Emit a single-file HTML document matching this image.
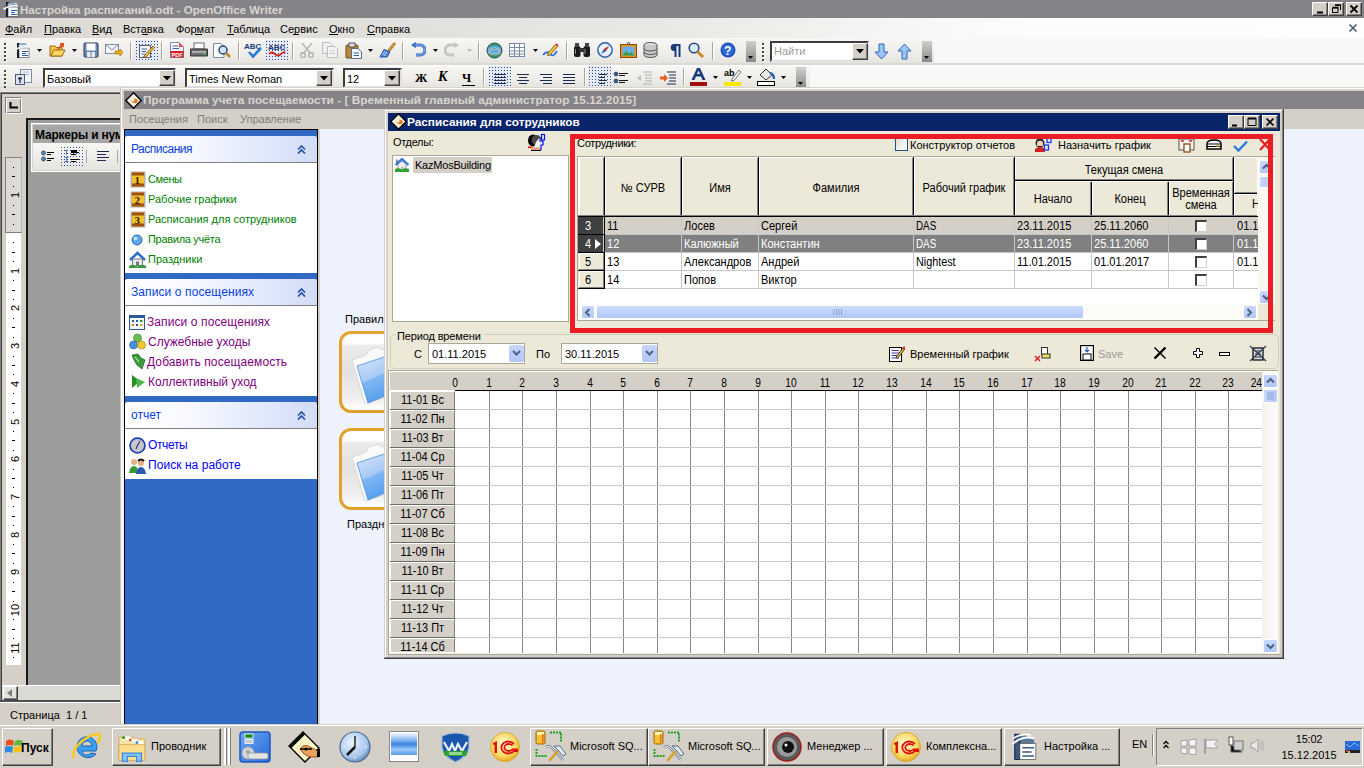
<!DOCTYPE html><html><head><meta charset="utf-8"><style>
html,body{margin:0;padding:0;width:1364px;height:768px;overflow:hidden;background:#d4d0c8}
body{position:relative;font-family:"Liberation Sans",sans-serif}
div,span,svg{position:absolute;box-sizing:border-box}
.t{white-space:nowrap}
</style></head><body>
<div style="left:0px;top:0px;width:1364px;height:18px;background:#858388"></div>
<svg style="left:1px;top:1px" width="18" height="16" viewBox="0 0 18 16"><rect x="5" y="1" width="2.5" height="15" fill="#0a1830"/><path d="M7 6H17V15.5H7Z" fill="#fff" stroke="#3a3a3a" stroke-width="0.6"/><path d="M10 9.5H16M10 11.5H14M10 13.5H16" stroke="#2a5aa8" stroke-width="1.2"/><path d="M2.5 8.5Q9 3.5 17 5" fill="none" stroke="#f4f6fa" stroke-width="1.6"/><path d="M6.5 4Q11 1 16 3" fill="none" stroke="#dde6f2" stroke-width="1.4"/><path d="M8 2H14" stroke="#4a78b8" stroke-width="1"/></svg>
<span class="t" style="left:20px;top:4px;font-size:11.6px;line-height:11.6px;color:#d8d5ce;font-weight:bold;letter-spacing:0px">Настройка расписаний.odt - OpenOffice Writer</span>
<div style="left:1312px;top:2px;width:16px;height:14px;background:#d4d0c8;border-top:1px solid #fff;border-left:1px solid #fff;border-right:1px solid #404040;border-bottom:1px solid #404040;box-shadow:inset -1px -1px 0 #808080"></div>
<div style="left:1328px;top:2px;width:16px;height:14px;background:#d4d0c8;border-top:1px solid #fff;border-left:1px solid #fff;border-right:1px solid #404040;border-bottom:1px solid #404040;box-shadow:inset -1px -1px 0 #808080"></div>
<div style="left:1346px;top:2px;width:16px;height:14px;background:#d4d0c8;border-top:1px solid #fff;border-left:1px solid #fff;border-right:1px solid #404040;border-bottom:1px solid #404040;box-shadow:inset -1px -1px 0 #808080"></div>
<svg style="left:1316px;top:5px" width="9" height="9" viewBox="0 0 9 9"><path d="M1 7.5H7" stroke="#000" stroke-width="2"/></svg>
<svg style="left:1332px;top:4px" width="9" height="9" viewBox="0 0 9 9"><path d="M3 1.5H8.5V6M0.5 4H6V8.5H0.5Z" fill="none" stroke="#000" stroke-width="1"/><path d="M3 1H9M0.5 3.5H6.5" stroke="#000" stroke-width="1.5"/></svg>
<svg style="left:1349px;top:4px" width="10" height="10" viewBox="0 0 10 10"><path d="M1.5 1.5L8.5 8.5M8.5 1.5L1.5 8.5" stroke="#000" stroke-width="1.8"/></svg>
<div style="left:0px;top:18px;width:1364px;height:20px;background:linear-gradient(90deg,#dddad4 0%,#e2e0dc 30%,#ebe9e6 50%,#f6f5f3 65%,#fdfcfc 75%,#fefcfc 100%)"></div>
<span class="t" style="left:5px;top:24px;font-size:11px;line-height:11px;color:#000;font-weight:normal;">Файл</span>
<span class="t" style="left:44px;top:24px;font-size:11px;line-height:11px;color:#000;font-weight:normal;">Правка</span>
<span class="t" style="left:92px;top:24px;font-size:11px;line-height:11px;color:#000;font-weight:normal;">Вид</span>
<span class="t" style="left:123px;top:24px;font-size:11px;line-height:11px;color:#000;font-weight:normal;">Вставка</span>
<span class="t" style="left:176px;top:24px;font-size:11px;line-height:11px;color:#000;font-weight:normal;">Формат</span>
<span class="t" style="left:227px;top:24px;font-size:11px;line-height:11px;color:#000;font-weight:normal;">Таблица</span>
<span class="t" style="left:280px;top:24px;font-size:11px;line-height:11px;color:#000;font-weight:normal;">Сервис</span>
<span class="t" style="left:329px;top:24px;font-size:11px;line-height:11px;color:#000;font-weight:normal;">Окно</span>
<span class="t" style="left:367px;top:24px;font-size:11px;line-height:11px;color:#000;font-weight:normal;">Справка</span>
<div style="left:5px;top:34px;width:9px;height:1px;background:#000"></div>
<div style="left:44px;top:34px;width:8px;height:1px;background:#000"></div>
<div style="left:92px;top:34px;width:7px;height:1px;background:#000"></div>
<div style="left:142px;top:34px;width:6px;height:1px;background:#000"></div>
<div style="left:195px;top:34px;width:7px;height:1px;background:#000"></div>
<div style="left:227px;top:34px;width:7px;height:1px;background:#000"></div>
<div style="left:293px;top:34px;width:6px;height:1px;background:#000"></div>
<div style="left:329px;top:34px;width:9px;height:1px;background:#000"></div>
<div style="left:367px;top:34px;width:8px;height:1px;background:#000"></div>
<svg style="left:1348px;top:23px" width="10" height="10" viewBox="0 0 10 10"><path d="M1.5 1.5L8.5 8.5M8.5 1.5L1.5 8.5" stroke="#4a5a6a" stroke-width="1.6"/></svg>
<div style="left:0px;top:38px;width:1364px;height:25px;background:#faf8f7"></div>
<div style="left:0px;top:38px;width:934px;height:25px;background:linear-gradient(180deg,#f8f7f5 0%,#efedea 60%,#e6e4df 100%)"></div>
<div style="left:0px;top:63px;width:1364px;height:2px;background:#dcd9d4"></div>
<div style="left:0px;top:65px;width:1364px;height:1px;background:#fff"></div>
<div style="left:4px;top:43px;width:2px;height:2px;background:#444;box-shadow:1px 1px 0 #fff"></div>
<div style="left:4px;top:47px;width:2px;height:2px;background:#444;box-shadow:1px 1px 0 #fff"></div>
<div style="left:4px;top:51px;width:2px;height:2px;background:#444;box-shadow:1px 1px 0 #fff"></div>
<div style="left:4px;top:55px;width:2px;height:2px;background:#444;box-shadow:1px 1px 0 #fff"></div>
<div style="left:4px;top:59px;width:2px;height:2px;background:#444;box-shadow:1px 1px 0 #fff"></div>
<svg style="left:12px;top:42px" width="18" height="16" viewBox="0 0 18 16"><rect x="5" y="1" width="2.5" height="15" fill="#0a1830"/><path d="M7 6H17V15.5H7Z" fill="#fff" stroke="#3a3a3a" stroke-width="0.6"/><path d="M10 9.5H16M10 11.5H14M10 13.5H16" stroke="#2a5aa8" stroke-width="1.2"/><path d="M2.5 8.5Q9 3.5 17 5" fill="none" stroke="#f4f6fa" stroke-width="1.6"/><path d="M6.5 4Q11 1 16 3" fill="none" stroke="#dde6f2" stroke-width="1.4"/><path d="M8 2H14" stroke="#4a78b8" stroke-width="1"/></svg>
<svg style="left:37px;top:49px" width="5" height="3" viewBox="0 0 5 3"><path d="M0 0H5L2.5 3Z" fill="#000"/></svg>
<svg style="left:49px;top:42px" width="17" height="16" viewBox="0 0 17 16"><path d="M1 4H6L7.5 5.5H13V14H1Z" fill="#f4c64a" stroke="#9a6a10"/><path d="M2 14L4.5 8H16L13 14Z" fill="#fbd765" stroke="#9a6a10"/><path d="M9 7L14 2M11 2H14V5" stroke="#e2541a" stroke-width="2" fill="none"/></svg>
<svg style="left:72px;top:49px" width="5" height="3" viewBox="0 0 5 3"><path d="M0 0H5L2.5 3Z" fill="#000"/></svg>
<svg style="left:83px;top:42px" width="16" height="16" viewBox="0 0 16 16"><rect x="1" y="1" width="14" height="14" rx="1" fill="#6a88b0" stroke="#2a3a58"/><rect x="3.5" y="1.5" width="9" height="7" fill="#fff"/><rect x="4" y="10" width="8" height="5" fill="#e8ecf2"/><path d="M8 10V15" stroke="#6a88b0"/></svg>
<svg style="left:105px;top:44px" width="18" height="13" viewBox="0 0 18 13"><rect x="0.5" y="0.5" width="13" height="9" fill="#f4f6fa" stroke="#7c8aa0"/><path d="M0.5 0.5L7 6L13.5 0.5" fill="none" stroke="#7c8aa0"/><path d="M10 7H15V5L18 8.5L15 12V10H10Z" fill="#f0b020" stroke="#b07000" stroke-width="0.7"/></svg>
<div style="left:130px;top:42px;width:1px;height:18px;background:#a7a6a3;border-right:1px solid #fff;width:2px"></div>
<div style="left:135px;top:40px;width:23px;height:22px;background-image:radial-gradient(#1f4fa8 0.8px,transparent 1px);background-size:3px 3px;background-color:#e8eaf0"></div>
<svg style="left:138px;top:43px" width="17" height="16" viewBox="0 0 17 16"><rect x="1.5" y="2.5" width="11" height="12" fill="#f4f6fa" stroke="#50607a"/><path d="M3.5 6H9M3.5 8.5H8M3.5 11H7" stroke="#3a6ab0"/><path d="M6 13L15 3L16.5 4.5L8 14L5.5 14.5Z" fill="#f6c838" stroke="#704010" stroke-width="0.8"/></svg>
<div style="left:161px;top:42px;width:1px;height:18px;background:#a7a6a3;border-right:1px solid #fff;width:2px"></div>
<svg style="left:170px;top:42px" width="14" height="16" viewBox="0 0 14 16"><path d="M0.5 0.5H9L13.5 5V15.5H0.5Z" fill="#f8f8fa" stroke="#7a8aa8"/><path d="M2.5 4H8M2.5 6.5H9" stroke="#3a6ab0"/><rect x="0.5" y="9" width="13" height="6.5" fill="#d42020"/><text x="1.5" y="14.5" font-size="5.5" font-weight="bold" fill="#fff" font-family="Liberation Sans">PDF</text><path d="M9 0.5V5H13.5" fill="#e44" /></svg>
<svg style="left:190px;top:42px" width="18" height="16" viewBox="0 0 18 16"><rect x="4" y="1" width="10" height="6" fill="#fff" stroke="#666"/><path d="M0.5 7H17.5V14H0.5Z" fill="#6c6c70" stroke="#333"/><rect x="2" y="9" width="14" height="2" fill="#aaa"/><rect x="13" y="11.5" width="2" height="1.5" fill="#3c3"/></svg>
<svg style="left:213px;top:42px" width="18" height="17" viewBox="0 0 18 17"><path d="M0.5 1.5H8L11 4.5V15.5H0.5Z" fill="#fafbfc" stroke="#7a8aa8"/><circle cx="10" cy="8" r="4" fill="#cfe4f8" stroke="#2a4a78" stroke-width="1.5"/><path d="M13 11L17 15" stroke="#c08020" stroke-width="2.5"/></svg>
<div style="left:238px;top:42px;width:1px;height:18px;background:#a7a6a3;border-right:1px solid #fff;width:2px"></div>
<svg style="left:244px;top:41px" width="19" height="18" viewBox="0 0 19 18"><text x="0" y="8" font-size="8" font-weight="bold" fill="#1a3a78" font-family="Liberation Sans">ABC</text><path d="M5 11L9 15.5L17 7" fill="none" stroke="#2a78d8" stroke-width="2.6"/></svg>
<div style="left:265px;top:40px;width:23px;height:22px;background-image:radial-gradient(#1f4fa8 0.8px,transparent 1px);background-size:3px 3px;background-color:#e8eaf0"></div>
<svg style="left:267px;top:41px" width="19" height="18" viewBox="0 0 19 18"><text x="1" y="9" font-size="8" font-weight="bold" fill="#1a3a78" font-family="Liberation Sans">ABC</text><path d="M2 13Q5 10 8 13T14 13T18 12" fill="none" stroke="#d42020" stroke-width="1.8"/></svg>
<div style="left:292px;top:42px;width:1px;height:18px;background:#a7a6a3;border-right:1px solid #fff;width:2px"></div>
<svg style="left:299px;top:42px" width="17" height="16" viewBox="0 0 17 16"><path d="M3 1L12 12M13 1L4 12" stroke="#b8b8b8" stroke-width="1.6"/><circle cx="4" cy="13" r="2.4" fill="none" stroke="#b0b0b0" stroke-width="1.4"/><circle cx="12" cy="13" r="2.4" fill="none" stroke="#b0b0b0" stroke-width="1.4"/></svg>
<svg style="left:322px;top:42px" width="16" height="16" viewBox="0 0 16 16"><path d="M0.5 0.5H8L10.5 3V11.5H0.5Z" fill="#f0f0f0" stroke="#bdbdbd"/><path d="M5.5 4.5H13L15.5 7V15.5H5.5Z" fill="#f4f4f4" stroke="#bdbdbd"/><path d="M7.5 9H13M7.5 11.5H13" stroke="#c8c8c8"/></svg>
<svg style="left:345px;top:42px" width="17" height="17" viewBox="0 0 17 17"><rect x="1" y="3" width="12" height="13" rx="1" fill="#b88a40" stroke="#6a4a10"/><rect x="4" y="1" width="6" height="4" fill="#e0e0e0" stroke="#555"/><path d="M6.5 6.5H13L16.5 10V16.5H6.5Z" fill="#f4f8fc" stroke="#5a6a88"/><path d="M8.5 11H14M8.5 13.5H14" stroke="#3a6ab0"/></svg>
<svg style="left:368px;top:49px" width="5" height="3" viewBox="0 0 5 3"><path d="M0 0H5L2.5 3Z" fill="#000"/></svg>
<svg style="left:379px;top:41px" width="17" height="18" viewBox="0 0 17 18"><path d="M9 9L15 1.5L16.5 3L11 10Z" fill="#e0a030" stroke="#805010" stroke-width="0.7"/><path d="M1 16L5 8.5L11 11L8 16Z" fill="#5a8ad8" stroke="#1a4a98"/><path d="M3 14L6 10M5 15L8 11" stroke="#bcd4f8"/></svg>
<div style="left:402px;top:42px;width:1px;height:18px;background:#a7a6a3;border-right:1px solid #fff;width:2px"></div>
<svg style="left:410px;top:42px" width="16" height="16" viewBox="0 0 16 16"><path d="M5 3H10A5 5 0 0 1 10 13H6" fill="none" stroke="#2a64c0" stroke-width="3"/><path d="M1 3L6 0V6Z" fill="#2a64c0"/><path d="M5 3H10A5 5 0 0 1 10 13H6" fill="none" stroke="#9cc0f0" stroke-width="1"/></svg>
<svg style="left:433px;top:49px" width="5" height="3" viewBox="0 0 5 3"><path d="M0 0H5L2.5 3Z" fill="#000"/></svg>
<svg style="left:444px;top:42px" width="16" height="16" viewBox="0 0 16 16"><path d="M11 3H6A5 5 0 0 0 6 13H10" fill="none" stroke="#c4c4c4" stroke-width="3"/><path d="M15 3L10 0V6Z" fill="#c4c4c4"/></svg>
<svg style="left:467px;top:49px" width="5" height="3" viewBox="0 0 5 3"><path d="M0 0H5L2.5 3Z" fill="#bbb"/></svg>
<div style="left:478px;top:42px;width:1px;height:18px;background:#a7a6a3;border-right:1px solid #fff;width:2px"></div>
<svg style="left:486px;top:42px" width="17" height="17" viewBox="0 0 17 17"><circle cx="8.5" cy="8.5" r="7.5" fill="#3a9a6a" stroke="#2a4a6a"/><path d="M2 6Q8 2 15 6V11Q8 15 2 11Z" fill="#5ab0e8"/><ellipse cx="8.5" cy="9.5" rx="5" ry="3" fill="none" stroke="#fff" stroke-width="1.6"/><ellipse cx="8.5" cy="9.5" rx="5" ry="3" fill="none" stroke="#333" stroke-width="0.6"/></svg>
<svg style="left:509px;top:42px" width="17" height="16" viewBox="0 0 17 16"><rect x="0.5" y="1.5" width="15" height="13" fill="#fff" stroke="#7a8aa8"/><path d="M0.5 5.5H15.5M0.5 9H15.5M0.5 12H15.5M5.5 1.5V14.5M10.5 1.5V14.5" stroke="#7a8aa8"/></svg>
<svg style="left:533px;top:49px" width="5" height="3" viewBox="0 0 5 3"><path d="M0 0H5L2.5 3Z" fill="#000"/></svg>
<svg style="left:542px;top:42px" width="17" height="16" viewBox="0 0 17 16"><path d="M1 13Q5 8 8 12T15 9" fill="none" stroke="#2a78d8" stroke-width="1.8"/><path d="M6 11L14 2L16 4L8 13L5.5 13.5Z" fill="#f6c838" stroke="#704010" stroke-width="0.8"/><path d="M14 2L16 4" stroke="#e04040" stroke-width="2"/></svg>
<div style="left:566px;top:42px;width:1px;height:18px;background:#a7a6a3;border-right:1px solid #fff;width:2px"></div>
<svg style="left:573px;top:42px" width="18" height="16" viewBox="0 0 18 16"><rect x="1" y="4" width="6.5" height="11" rx="2" fill="#1a1a1a"/><rect x="10.5" y="4" width="6.5" height="11" rx="2" fill="#1a1a1a"/><rect x="6" y="6" width="6" height="4" fill="#333"/><rect x="2" y="1" width="4" height="4" fill="#444"/><rect x="12" y="1" width="4" height="4" fill="#444"/><path d="M2.5 7V12M12 7V12" stroke="#888"/></svg>
<svg style="left:597px;top:42px" width="16" height="16" viewBox="0 0 16 16"><circle cx="8" cy="8" r="7.2" fill="#e8f0fa" stroke="#2a5aa8" stroke-width="1.4"/><path d="M4 12L7 7L12 4L9 9Z" fill="#2a5aa8"/><path d="M12 4L9 9L7 7Z" fill="#e03030"/></svg>
<svg style="left:620px;top:42px" width="17" height="16" viewBox="0 0 17 16"><rect x="0.5" y="2.5" width="16" height="13" fill="#e89020" stroke="#8a4a00"/><rect x="2.5" y="4.5" width="12" height="9" fill="#6ab0e8"/><path d="M2.5 13.5L6 9L9 12L11 10L14.5 13.5Z" fill="#3a9a3a"/><path d="M7 2L8.5 0L10 2" stroke="#555" fill="none"/></svg>
<svg style="left:643px;top:42px" width="15" height="16" viewBox="0 0 15 16"><ellipse cx="7.5" cy="3" rx="6.5" ry="2.5" fill="#e0e0e0" stroke="#555"/><path d="M1 3V13A6.5 2.5 0 0 0 14 13V3" fill="#c8c8c8" stroke="#555"/><path d="M1 6.5A6.5 2.5 0 0 0 14 6.5M1 10A6.5 2.5 0 0 0 14 10" fill="none" stroke="#555"/></svg>
<svg style="left:668px;top:43px" width="13" height="14" viewBox="0 0 13 14"><path d="M6 1H12.5V14H10.5V3H8.5V14H6.5V8A3.5 3.5 0 0 1 6 1Z" fill="#1a3a78"/></svg>
<svg style="left:688px;top:42px" width="16" height="16" viewBox="0 0 16 16"><circle cx="6" cy="6" r="4.8" fill="#d8ecfa" stroke="#2a4a78" stroke-width="1.6"/><path d="M9.5 9.5L15 15" stroke="#d08a20" stroke-width="3"/></svg>
<div style="left:712px;top:42px;width:1px;height:18px;background:#a7a6a3;border-right:1px solid #fff;width:2px"></div>
<svg style="left:720px;top:42px" width="16" height="16" viewBox="0 0 16 16"><circle cx="8" cy="8" r="7.5" fill="#1a4ab0"/><circle cx="8" cy="8" r="6.3" fill="#2a6ad8"/><text x="4" y="13" font-size="12" font-weight="bold" fill="#fff" font-family="Liberation Sans">?</text></svg>
<div style="left:746px;top:41px;width:10px;height:21px;background:linear-gradient(180deg,#d0d0d0,#8a8a8a)"></div>
<svg style="left:748px;top:56px" width="5" height="3" viewBox="0 0 5 3"><path d="M0 0H5L2.5 3Z" fill="#000"/></svg>
<div style="left:762px;top:43px;width:2px;height:2px;background:#444;box-shadow:1px 1px 0 #fff"></div>
<div style="left:762px;top:47px;width:2px;height:2px;background:#444;box-shadow:1px 1px 0 #fff"></div>
<div style="left:762px;top:51px;width:2px;height:2px;background:#444;box-shadow:1px 1px 0 #fff"></div>
<div style="left:762px;top:55px;width:2px;height:2px;background:#444;box-shadow:1px 1px 0 #fff"></div>
<div style="left:762px;top:59px;width:2px;height:2px;background:#444;box-shadow:1px 1px 0 #fff"></div>
<div style="left:770px;top:41px;width:99px;height:21px;background:#fff;border:2px solid #3c3c3c;border-right-color:#e0e0e0;border-bottom-color:#e0e0e0"></div>
<span class="t" style="left:774px;top:46px;font-size:11px;line-height:11px;color:#a0a0a0;font-weight:normal;">Найти</span>
<div style="left:852px;top:43px;width:16px;height:17px;background:#d4d0c8;border-top:1px solid #fff;border-left:1px solid #fff;border-right:1px solid #404040;border-bottom:1px solid #404040;box-shadow:inset -1px -1px 0 #808080"></div>
<svg style="left:856px;top:49px" width="8" height="5" viewBox="0 0 8 5"><path d="M0 0H8L4 4.5Z" fill="#000"/></svg>
<svg style="left:874px;top:43px" width="15" height="17" viewBox="0 0 15 17"><path d="M5 1H10V9H14L7.5 16L1 9H5Z" fill="#9cc4f4" stroke="#2a64c0"/></svg>
<svg style="left:897px;top:43px" width="15" height="17" viewBox="0 0 15 17"><path d="M5 16H10V8H14L7.5 1L1 8H5Z" fill="#9cc4f4" stroke="#2a64c0"/></svg>
<div style="left:922px;top:41px;width:10px;height:21px;background:linear-gradient(180deg,#d0d0d0,#8a8a8a)"></div>
<svg style="left:924px;top:56px" width="5" height="3" viewBox="0 0 5 3"><path d="M0 0H5L2.5 3Z" fill="#000"/></svg>
<div style="left:0px;top:66px;width:1364px;height:21px;background:#faf8f7"></div>
<div style="left:0px;top:66px;width:810px;height:21px;background:linear-gradient(180deg,#f8f7f5 0%,#efedea 60%,#e6e4df 100%)"></div>
<div style="left:0px;top:87px;width:1364px;height:1px;background:#dcd8d4"></div>
<div style="left:4px;top:70px;width:2px;height:2px;background:#444;box-shadow:1px 1px 0 #fff"></div>
<div style="left:4px;top:74px;width:2px;height:2px;background:#444;box-shadow:1px 1px 0 #fff"></div>
<div style="left:4px;top:78px;width:2px;height:2px;background:#444;box-shadow:1px 1px 0 #fff"></div>
<div style="left:4px;top:82px;width:2px;height:2px;background:#444;box-shadow:1px 1px 0 #fff"></div>
<div style="left:4px;top:86px;width:2px;height:2px;background:#444;box-shadow:1px 1px 0 #fff"></div>
<svg style="left:15px;top:68px" width="17" height="18" viewBox="0 0 17 18"><rect x="5.5" y="1.5" width="11" height="13" fill="#f4f6fa" stroke="#7a8aa8"/><path d="M7.5 4H14M7.5 6.5H14" stroke="#a8b8d0"/><rect x="0.5" y="6.5" width="9" height="10" fill="#dde4ee" stroke="#4a5a78"/><path d="M5 9V15M3 10.5H7" stroke="#1a2a48" stroke-width="1.3"/></svg>
<div style="left:43px;top:68px;width:133px;height:20px;background:#fff;border:2px solid #3c3c3c;border-right-color:#e0e0e0;border-bottom-color:#e0e0e0"></div>
<span class="t" style="left:47px;top:74px;font-size:11px;line-height:11px;color:#000;font-weight:normal;">Базовый</span>
<div style="left:159px;top:70px;width:16px;height:16px;background:#d4d0c8;border-top:1px solid #fff;border-left:1px solid #fff;border-right:1px solid #404040;border-bottom:1px solid #404040;box-shadow:inset -1px -1px 0 #808080"></div>
<svg style="left:163px;top:76px" width="8" height="5" viewBox="0 0 8 5"><path d="M0 0H8L4 4.5Z" fill="#000"/></svg>
<div style="left:185px;top:68px;width:149px;height:20px;background:#fff;border:2px solid #3c3c3c;border-right-color:#e0e0e0;border-bottom-color:#e0e0e0"></div>
<span class="t" style="left:189px;top:74px;font-size:11px;line-height:11px;color:#000;font-weight:normal;">Times New Roman</span>
<div style="left:316px;top:70px;width:16px;height:16px;background:#d4d0c8;border-top:1px solid #fff;border-left:1px solid #fff;border-right:1px solid #404040;border-bottom:1px solid #404040;box-shadow:inset -1px -1px 0 #808080"></div>
<svg style="left:320px;top:76px" width="8" height="5" viewBox="0 0 8 5"><path d="M0 0H8L4 4.5Z" fill="#000"/></svg>
<div style="left:343px;top:68px;width:59px;height:20px;background:#fff;border:2px solid #3c3c3c;border-right-color:#e0e0e0;border-bottom-color:#e0e0e0"></div>
<span class="t" style="left:347px;top:74px;font-size:11px;line-height:11px;color:#000;font-weight:normal;">12</span>
<div style="left:384px;top:70px;width:16px;height:16px;background:#d4d0c8;border-top:1px solid #fff;border-left:1px solid #fff;border-right:1px solid #404040;border-bottom:1px solid #404040;box-shadow:inset -1px -1px 0 #808080"></div>
<svg style="left:388px;top:76px" width="8" height="5" viewBox="0 0 8 5"><path d="M0 0H8L4 4.5Z" fill="#000"/></svg>
<span class="t" style="left:415px;top:72px;font-size:12.5px;line-height:12.5px;color:#000;font-weight:bold;font-family:Liberation Serif">Ж</span>
<span class="t" style="left:438px;top:70px;font-size:14px;line-height:14px;color:#000;font-weight:bold;font-style:italic;font-family:Liberation Serif">К</span>
<span class="t" style="left:462px;top:72px;font-size:12.5px;line-height:12.5px;color:#000;font-weight:bold;font-family:Liberation Serif">Ч</span>
<div style="left:462px;top:85px;width:13px;height:1px;background:#000"></div>
<div style="left:483px;top:68px;width:1px;height:18px;background:#a7a6a3;border-right:1px solid #fff;width:2px"></div>
<div style="left:488px;top:66px;width:23px;height:22px;background-image:radial-gradient(#1f4fa8 0.8px,transparent 1px);background-size:3px 3px;background-color:#e8eaf0"></div>
<svg style="left:492px;top:70px" width="16" height="16" viewBox="0 0 16 16"><path d="M2 4.5H14" stroke="#1a2a48" stroke-width="1"/><path d="M2 7.5H14" stroke="#1a2a48" stroke-width="1"/><path d="M2 10.5H14" stroke="#1a2a48" stroke-width="1"/><path d="M2 13.5H14" stroke="#1a2a48" stroke-width="1"/></svg>
<svg style="left:515px;top:70px" width="16" height="16" viewBox="0 0 16 16"><path d="M2 4.5H14" stroke="#1a2a48" stroke-width="1"/><path d="M4 7.5H12" stroke="#1a2a48" stroke-width="1"/><path d="M2 10.5H14" stroke="#1a2a48" stroke-width="1"/><path d="M4 13.5H12" stroke="#1a2a48" stroke-width="1"/></svg>
<svg style="left:538px;top:70px" width="16" height="16" viewBox="0 0 16 16"><path d="M2 4.5H14" stroke="#1a2a48" stroke-width="1"/><path d="M5 7.5H14" stroke="#1a2a48" stroke-width="1"/><path d="M2 10.5H14" stroke="#1a2a48" stroke-width="1"/><path d="M5 13.5H14" stroke="#1a2a48" stroke-width="1"/></svg>
<svg style="left:561px;top:70px" width="16" height="16" viewBox="0 0 16 16"><path d="M2 4.5H14" stroke="#1a2a48" stroke-width="1"/><path d="M2 7.5H14" stroke="#1a2a48" stroke-width="1"/><path d="M2 10.5H14" stroke="#1a2a48" stroke-width="1"/><path d="M2 13.5H14" stroke="#1a2a48" stroke-width="1"/></svg>
<div style="left:584px;top:68px;width:1px;height:18px;background:#a7a6a3;border-right:1px solid #fff;width:2px"></div>
<div style="left:588px;top:66px;width:23px;height:22px;background-image:radial-gradient(#1f4fa8 0.8px,transparent 1px);background-size:3px 3px;background-color:#e8eaf0"></div>
<svg style="left:592px;top:70px" width="16" height="16" viewBox="0 0 16 16"><path d="M7 4.5H15" stroke="#1a2a48" stroke-width="1"/><path d="M7 7.5H13" stroke="#1a2a48" stroke-width="1"/><path d="M7 10.5H15" stroke="#1a2a48" stroke-width="1"/><path d="M7 13.5H13" stroke="#1a2a48" stroke-width="1"/></svg>
<svg style="left:613px;top:70px" width="16" height="16" viewBox="0 0 16 16"><circle cx="3" cy="4" r="2" fill="#3a5a8a" stroke="#1a2a48" stroke-width="0.6"/><circle cx="3" cy="11" r="2" fill="#3a5a8a" stroke="#1a2a48" stroke-width="0.6"/><path d="M6 3.5H15M6 5.5H12M6 10.5H15M6 12.5H12" stroke="#111" stroke-width="1"/></svg>
<svg style="left:636px;top:70px" width="17" height="16" viewBox="0 0 17 16"><path d="M7 2H16M9 5H16M9 8H16M9 11H16M7 14H16" stroke="#b0b0b0" stroke-width="1.2"/><path d="M1 8L5 5V11Z" fill="#c0c0c0"/></svg>
<svg style="left:660px;top:70px" width="17" height="16" viewBox="0 0 17 16"><path d="M7 2H16M9 5H16M9 8H16M9 11H16M7 14H16" stroke="#1a2a48" stroke-width="1.2"/><path d="M0 6.5H4V4L8 8L4 12V9.5H0Z" fill="#e86020"/></svg>
<div style="left:683px;top:68px;width:1px;height:18px;background:#a7a6a3;border-right:1px solid #fff;width:2px"></div>
<svg style="left:690px;top:67px" width="17" height="20" viewBox="0 0 17 20"><path d="M1.5 13L7 1H10L15.5 13H12.5L11 9.5H6L4.5 13ZM7 7H10L8.5 3.5Z" fill="#1a3a78"/><rect x="0" y="15" width="17" height="4" fill="#a01010"/></svg>
<svg style="left:713px;top:76px" width="5" height="3" viewBox="0 0 5 3"><path d="M0 0H5L2.5 3Z" fill="#000"/></svg>
<svg style="left:724px;top:67px" width="18" height="20" viewBox="0 0 18 20"><text x="0" y="9" font-size="9" font-weight="bold" fill="#000" font-family="Liberation Sans">ab</text><path d="M8 12L15 3L17 5L10 13.5L7.5 14Z" fill="#f4f4f4" stroke="#555" stroke-width="0.8"/><rect x="0" y="15" width="17" height="4" fill="#f8e800"/></svg>
<svg style="left:747px;top:76px" width="5" height="3" viewBox="0 0 5 3"><path d="M0 0H5L2.5 3Z" fill="#000"/></svg>
<svg style="left:757px;top:67px" width="19" height="20" viewBox="0 0 19 20"><path d="M3 8L9 2L15 8L9 13Z" fill="#e8e8e8" stroke="#333"/><path d="M13 6Q17 7 17 12" stroke="#2a64c0" stroke-width="2.5" fill="none"/><rect x="0.5" y="14.5" width="17" height="4" fill="#fff" stroke="#000"/></svg>
<svg style="left:781px;top:76px" width="5" height="3" viewBox="0 0 5 3"><path d="M0 0H5L2.5 3Z" fill="#000"/></svg>
<div style="left:796px;top:67px;width:10px;height:21px;background:linear-gradient(180deg,#d0d0d0,#8a8a8a)"></div>
<svg style="left:798px;top:82px" width="5" height="3" viewBox="0 0 5 3"><path d="M0 0H5L2.5 3Z" fill="#000"/></svg>
<div style="left:0px;top:90px;width:123px;height:635px;background:#d4d0c8"></div>
<div style="left:0px;top:88px;width:121px;height:4px;background:#e6e3de"></div>
<div style="left:0px;top:92px;width:121px;height:1px;background:#808080"></div>
<div style="left:0px;top:93px;width:121px;height:1px;background:#404040"></div>
<div style="left:0px;top:92px;width:1px;height:610px;background:#808080"></div>
<div style="left:1px;top:93px;width:1px;height:608px;background:#404040"></div>
<div style="left:5px;top:97px;width:17px;height:17px;background:#d4d0c8;border-top:1px solid #808080;border-left:1px solid #808080;border-right:1px solid #fff;border-bottom:1px solid #fff;box-shadow:inset 1px 1px 0 #fff, inset -1px -1px 0 #808080"></div>
<svg style="left:9px;top:102px" width="9" height="8" viewBox="0 0 9 8"><path d="M1.5 0V5.5H9" fill="none" stroke="#000" stroke-width="2"/></svg>
<div style="left:5px;top:157px;width:17px;height:76px;background:#dcdad6;border:1px solid #808080;border-right-color:#b8b6b0"></div>
<div style="left:6px;top:233px;width:15px;height:432px;background:#fff"></div>
<div style="left:13px;top:167px;width:1px;height:1px;background:#000"></div>
<div style="left:12px;top:176px;width:3px;height:1px;background:#000"></div>
<div style="left:13px;top:186px;width:1px;height:1px;background:#000"></div>
<div style="left:13px;top:205px;width:1px;height:1px;background:#000"></div>
<div style="left:12px;top:214px;width:3px;height:1px;background:#000"></div>
<div style="left:13px;top:224px;width:1px;height:1px;background:#000"></div>
<div style="left:13px;top:242px;width:1px;height:1px;background:#000"></div>
<div style="left:12px;top:252px;width:3px;height:1px;background:#000"></div>
<div style="left:13px;top:261px;width:1px;height:1px;background:#000"></div>
<div style="left:13px;top:280px;width:1px;height:1px;background:#000"></div>
<div style="left:12px;top:290px;width:3px;height:1px;background:#000"></div>
<div style="left:13px;top:299px;width:1px;height:1px;background:#000"></div>
<span class="t" style="left:9px;top:263px;width:14px;height:16px;font-size:11px;line-height:14px;text-align:center;transform:rotate(-90deg);transform-origin:50% 50%">1</span>
<div style="left:13px;top:318px;width:1px;height:1px;background:#000"></div>
<div style="left:12px;top:327px;width:3px;height:1px;background:#000"></div>
<div style="left:13px;top:337px;width:1px;height:1px;background:#000"></div>
<span class="t" style="left:9px;top:300px;width:14px;height:16px;font-size:11px;line-height:14px;text-align:center;transform:rotate(-90deg);transform-origin:50% 50%">2</span>
<div style="left:13px;top:356px;width:1px;height:1px;background:#000"></div>
<div style="left:12px;top:365px;width:3px;height:1px;background:#000"></div>
<div style="left:13px;top:374px;width:1px;height:1px;background:#000"></div>
<span class="t" style="left:9px;top:338px;width:14px;height:16px;font-size:11px;line-height:14px;text-align:center;transform:rotate(-90deg);transform-origin:50% 50%">3</span>
<div style="left:13px;top:393px;width:1px;height:1px;background:#000"></div>
<div style="left:12px;top:403px;width:3px;height:1px;background:#000"></div>
<div style="left:13px;top:412px;width:1px;height:1px;background:#000"></div>
<span class="t" style="left:9px;top:376px;width:14px;height:16px;font-size:11px;line-height:14px;text-align:center;transform:rotate(-90deg);transform-origin:50% 50%">4</span>
<div style="left:13px;top:431px;width:1px;height:1px;background:#000"></div>
<div style="left:12px;top:440px;width:3px;height:1px;background:#000"></div>
<div style="left:13px;top:450px;width:1px;height:1px;background:#000"></div>
<span class="t" style="left:9px;top:414px;width:14px;height:16px;font-size:11px;line-height:14px;text-align:center;transform:rotate(-90deg);transform-origin:50% 50%">5</span>
<div style="left:13px;top:469px;width:1px;height:1px;background:#000"></div>
<div style="left:12px;top:478px;width:3px;height:1px;background:#000"></div>
<div style="left:13px;top:487px;width:1px;height:1px;background:#000"></div>
<span class="t" style="left:9px;top:451px;width:14px;height:16px;font-size:11px;line-height:14px;text-align:center;transform:rotate(-90deg);transform-origin:50% 50%">6</span>
<div style="left:13px;top:506px;width:1px;height:1px;background:#000"></div>
<div style="left:12px;top:516px;width:3px;height:1px;background:#000"></div>
<div style="left:13px;top:525px;width:1px;height:1px;background:#000"></div>
<span class="t" style="left:9px;top:489px;width:14px;height:16px;font-size:11px;line-height:14px;text-align:center;transform:rotate(-90deg);transform-origin:50% 50%">7</span>
<div style="left:13px;top:544px;width:1px;height:1px;background:#000"></div>
<div style="left:12px;top:553px;width:3px;height:1px;background:#000"></div>
<div style="left:13px;top:563px;width:1px;height:1px;background:#000"></div>
<span class="t" style="left:9px;top:527px;width:14px;height:16px;font-size:11px;line-height:14px;text-align:center;transform:rotate(-90deg);transform-origin:50% 50%">8</span>
<div style="left:13px;top:582px;width:1px;height:1px;background:#000"></div>
<div style="left:12px;top:591px;width:3px;height:1px;background:#000"></div>
<div style="left:13px;top:601px;width:1px;height:1px;background:#000"></div>
<span class="t" style="left:9px;top:564px;width:14px;height:16px;font-size:11px;line-height:14px;text-align:center;transform:rotate(-90deg);transform-origin:50% 50%">9</span>
<div style="left:13px;top:619px;width:1px;height:1px;background:#000"></div>
<div style="left:12px;top:629px;width:3px;height:1px;background:#000"></div>
<div style="left:13px;top:638px;width:1px;height:1px;background:#000"></div>
<span class="t" style="left:9px;top:602px;width:14px;height:16px;font-size:11px;line-height:14px;text-align:center;transform:rotate(-90deg);transform-origin:50% 50%">10</span>
<div style="left:13px;top:657px;width:1px;height:1px;background:#000"></div>
<span class="t" style="left:9px;top:640px;width:14px;height:16px;font-size:11px;line-height:14px;text-align:center;transform:rotate(-90deg);transform-origin:50% 50%">11</span>
<span class="t" style="left:9px;top:187px;width:14px;height:16px;font-size:11px;line-height:14px;text-align:center;transform:rotate(-90deg)">1</span>
<div style="left:26px;top:118px;width:97px;height:567px;background-color:#9a9c99;background-image:radial-gradient(circle at 1.5px 0.5px,#a9a9a9 0.8px,transparent 1px),radial-gradient(circle at 3.5px 2.5px,#a9a9a9 0.8px,transparent 1px);background-size:4px 4px"></div>
<div style="left:26px;top:118px;width:97px;height:2px;background:#1a1a1a"></div>
<div style="left:26px;top:118px;width:2px;height:567px;background:#1a1a1a"></div>
<div style="left:31px;top:123px;width:92px;height:49px;background:#d6d4cf;border:1px solid #fff;border-right:none"></div>
<div style="left:33px;top:125px;width:90px;height:18px;background-color:#a4a4a4;background-image:radial-gradient(#b4b4b4 0.6px,transparent 0.8px);background-size:3px 3px"></div>
<span class="t" style="left:35px;top:129px;font-size:12px;line-height:12px;color:#000;font-weight:bold;letter-spacing:-0.2px">Маркеры и нум</span>
<div style="left:33px;top:143px;width:90px;height:27px;background:linear-gradient(180deg,#f8f7f5,#e6e4df)"></div>
<svg style="left:41px;top:150px" width="15" height="12" viewBox="0 0 15 12"><circle cx="2.5" cy="3" r="2" fill="#5a8ab8" stroke="#1a2a48" stroke-width="0.7"/><circle cx="2.5" cy="9" r="2" fill="#5a8ab8" stroke="#1a2a48" stroke-width="0.7"/><path d="M6 2.5H13M6 4.5H10M6 8.5H13M6 10.5H10" stroke="#000" stroke-width="1"/></svg>
<div style="left:60px;top:146px;width:23px;height:21px;background-image:radial-gradient(#1f4fa8 0.8px,transparent 1px);background-size:3px 3px"></div>
<svg style="left:63px;top:149px" width="17" height="15" viewBox="0 0 17 15"><path d="M3.5 1V6M2 1.5H5M3.5 8V13M1.5 8.5H5.5M1.5 12.5H5.5" stroke="#5a7aa8"/><path d="M8 3.5H16M8 5.5H13M8 10.5H16M8 12.5H13" stroke="#000" stroke-width="1"/><rect x="8" y="1" width="6" height="2" fill="#000"/></svg>
<div style="left:86px;top:150px;width:1px;height:13px;background:#a7a6a3"></div>
<svg style="left:96px;top:150px" width="14" height="12" viewBox="0 0 14 12"><path d="M1 1.5H13M1 4.5H10M1 7.5H13M1 10.5H10" stroke="#1a2a48" stroke-width="1.2"/></svg>
<div style="left:117px;top:150px;width:1px;height:13px;background:#a7a6a3"></div>
<div style="left:2px;top:685px;width:118px;height:15px;background:#dbd9d4;border-top:1px solid #fff"></div>
<div style="left:3px;top:686px;width:15px;height:14px;background:#e4e2de;border-top:1px solid #fff;border-left:1px solid #fff;border-right:1px solid #404040;border-bottom:1px solid #404040;box-shadow:inset -1px -1px 0 #808080"></div>
<svg style="left:7px;top:689px" width="6" height="8" viewBox="0 0 6 8"><path d="M5 0V8L0 4Z" fill="#808080"/></svg>
<div style="left:0px;top:700px;width:123px;height:2px;background:#505050"></div>
<div style="left:0px;top:702px;width:123px;height:1px;background:#fff"></div>
<span class="t" style="left:10px;top:710px;font-size:11px;line-height:11px;color:#000;font-weight:normal;">Страница&nbsp; 1 / 1</span>
<div style="left:120px;top:87px;width:1244px;height:638px;background:#d4d0c8;border-left:1px solid #c8c4bc;border-top:1px solid #d8d4cc"></div>
<div style="left:121px;top:88px;width:1243px;height:1px;background:#fff"></div>
<div style="left:121px;top:88px;width:1px;height:637px;background:#fff"></div>
<div style="left:124px;top:91px;width:1240px;height:18px;background:#858388"></div>
<svg style="left:125px;top:92px" width="17" height="17" viewBox="0 0 17 17"><path d="M8.5 0.8L16.2 8.5L8.5 16.2L0.8 8.5Z" fill="#f6f2e0" stroke="#000" stroke-width="1.4"/><path d="M6 8Q9 5 13 8L12 11Q9 12 7 10Z" fill="#e87820"/><circle cx="8" cy="8" r="1.5" fill="#fff"/></svg>
<span class="t" style="left:143px;top:95px;font-size:11.8px;line-height:11.8px;color:#d8d5ce;font-weight:bold;letter-spacing:0.04px">Программа учета посещаемости - [ Временный главный администратор 15.12.2015]</span>
<span class="t" style="left:129px;top:114px;font-size:11px;line-height:11px;color:#7e7d7a;font-weight:normal;">Посещения</span>
<span class="t" style="left:197px;top:114px;font-size:11px;line-height:11px;color:#7e7d7a;font-weight:normal;">Поиск</span>
<span class="t" style="left:240px;top:114px;font-size:11px;line-height:11px;color:#7e7d7a;font-weight:normal;">Управление</span>
<div style="left:122px;top:129px;width:1242px;height:596px;background:#eef2fd"></div>
<div style="left:124px;top:129px;width:194px;height:595px;background:#316ac5"></div>
<div style="left:124px;top:129px;width:194px;height:1px;background:#000"></div>
<div style="left:124px;top:129px;width:1px;height:595px;background:#000"></div>
<div style="left:317px;top:129px;width:1px;height:595px;background:#000"></div>
<div style="left:318px;top:129px;width:2px;height:595px;background:#d4d0c8"></div>
<div style="left:122px;top:724px;width:1242px;height:2px;background:#fff"></div>
<div style="left:125px;top:136px;width:192px;height:27px;background:linear-gradient(90deg,#ffffff 0%,#f6f8fe 35%,#dfe7fb 75%,#d2dcf7 100%);border-bottom:1px solid #808080;border-radius:2px 2px 0 0"></div>
<span class="t" style="left:131px;top:143px;font-size:12px;line-height:12px;color:#0a3ee0;font-weight:normal;letter-spacing:-0.5px;">Расписания</span>
<svg style="left:297px;top:145px" width="9" height="9" viewBox="0 0 9 9"><path d="M1 4.5L4.5 1L8 4.5M1 8.5L4.5 5L8 8.5" fill="none" stroke="#1f4e9e" stroke-width="1.6"/></svg>
<div style="left:125px;top:163px;width:192px;height:110px;background:#fff"></div>
<div style="left:125px;top:279px;width:192px;height:27px;background:linear-gradient(90deg,#ffffff 0%,#f6f8fe 35%,#dfe7fb 75%,#d2dcf7 100%);border-bottom:1px solid #808080;border-radius:2px 2px 0 0"></div>
<span class="t" style="left:131px;top:286px;font-size:12px;line-height:12px;color:#0a3ee0;font-weight:normal;letter-spacing:0.1px;">Записи о посещениях</span>
<svg style="left:297px;top:288px" width="9" height="9" viewBox="0 0 9 9"><path d="M1 4.5L4.5 1L8 4.5M1 8.5L4.5 5L8 8.5" fill="none" stroke="#1f4e9e" stroke-width="1.6"/></svg>
<div style="left:125px;top:306px;width:192px;height:90px;background:#fff"></div>
<div style="left:125px;top:402px;width:192px;height:27px;background:linear-gradient(90deg,#ffffff 0%,#f6f8fe 35%,#dfe7fb 75%,#d2dcf7 100%);border-bottom:1px solid #808080;border-radius:2px 2px 0 0"></div>
<span class="t" style="left:131px;top:409px;font-size:12px;line-height:12px;color:#0a3ee0;font-weight:normal;letter-spacing:0px;">отчет</span>
<svg style="left:297px;top:411px" width="9" height="9" viewBox="0 0 9 9"><path d="M1 4.5L4.5 1L8 4.5M1 8.5L4.5 5L8 8.5" fill="none" stroke="#1f4e9e" stroke-width="1.6"/></svg>
<div style="left:125px;top:429px;width:192px;height:50px;background:#fff"></div>
<svg style="left:130px;top:171px" width="16" height="17" viewBox="0 0 16 17"><rect x="0.5" y="0.5" width="15" height="16" fill="#b0b0b0"/><rect x="2" y="1.5" width="12" height="14" fill="#f0c030"/><rect x="2" y="1.5" width="12" height="3" fill="#a05010"/><rect x="2" y="12.5" width="12" height="3" fill="#a05010"/><text x="4.5" y="13" font-size="11" font-weight="bold" fill="#3a2000" font-family="Liberation Serif">1</text></svg>
<span class="t" style="left:148px;top:174px;font-size:11px;line-height:11px;color:#008000;font-weight:normal;letter-spacing:-0.4px;">Смены</span>
<svg style="left:130px;top:191px" width="16" height="17" viewBox="0 0 16 17"><rect x="0.5" y="0.5" width="15" height="16" fill="#b0b0b0"/><rect x="2" y="1.5" width="12" height="14" fill="#f0c030"/><rect x="2" y="1.5" width="12" height="3" fill="#a05010"/><rect x="2" y="12.5" width="12" height="3" fill="#a05010"/><text x="4.5" y="13" font-size="11" font-weight="bold" fill="#3a2000" font-family="Liberation Serif">2</text></svg>
<span class="t" style="left:148px;top:194px;font-size:11px;line-height:11px;color:#008000;font-weight:normal;">Рабочие графики</span>
<svg style="left:130px;top:211px" width="16" height="17" viewBox="0 0 16 17"><rect x="0.5" y="0.5" width="15" height="16" fill="#b0b0b0"/><rect x="2" y="1.5" width="12" height="14" fill="#f0c030"/><rect x="2" y="1.5" width="12" height="3" fill="#a05010"/><rect x="2" y="12.5" width="12" height="3" fill="#a05010"/><text x="4.5" y="13" font-size="11" font-weight="bold" fill="#3a2000" font-family="Liberation Serif">3</text></svg>
<span class="t" style="left:148px;top:214px;font-size:11px;line-height:11px;color:#008000;font-weight:normal;">Расписания для сотрудников</span>
<svg style="left:131px;top:234px" width="12" height="12" viewBox="0 0 12 12"><circle cx="6" cy="6" r="5" fill="#5aa8f0" stroke="#2a6ab0"/><circle cx="4.5" cy="4.5" r="2" fill="#bfe0ff"/></svg>
<span class="t" style="left:148px;top:234px;font-size:11px;line-height:11px;color:#008000;font-weight:normal;letter-spacing:-0.3px;">Правила учёта</span>
<svg style="left:129px;top:251px" width="17" height="17" viewBox="0 0 17 17"><path d="M1 9L8.5 2L16 9" fill="none" stroke="#2a6ad0" stroke-width="2.4"/><rect x="3.5" y="8" width="10" height="7" fill="#e8ecf0" stroke="#777"/><rect x="7" y="10.5" width="3" height="4.5" fill="#778"/><path d="M0 15Q4 12 8 16Q12 12 17 15V17H0Z" fill="#3a9a3a"/></svg>
<span class="t" style="left:148px;top:254px;font-size:11px;line-height:11px;color:#008000;font-weight:normal;">Праздники</span>
<svg style="left:129px;top:315px" width="16" height="15" viewBox="0 0 16 15"><rect x="0.5" y="0.5" width="15" height="14" fill="#f4f8fc" stroke="#2a5a98"/><rect x="0.5" y="0.5" width="15" height="2.5" fill="#2a5a98"/><path d="M3 6H5M7 6H9M11 6H13M3 10H5M7 10H9M11 10H13" stroke="#2a5a98" stroke-width="1.8"/><rect x="2.5" y="9" width="2.5" height="2" fill="#f08020"/><rect x="11" y="9" width="2.5" height="2" fill="#e0a020"/><rect x="11" y="5" width="2.5" height="2" fill="#20a020"/></svg>
<span class="t" style="left:147px;top:316px;font-size:12px;line-height:12px;color:#800080;font-weight:normal;letter-spacing:0.1px;">Записи о посещениях</span>
<svg style="left:129px;top:333px" width="17" height="17" viewBox="0 0 17 17"><circle cx="8.5" cy="5" r="4" fill="#6abf50" stroke="#3a7a30" stroke-width="0.6"/><circle cx="4.5" cy="12" r="4" fill="#4a90d8" stroke="#2a5a98" stroke-width="0.6"/><circle cx="12.5" cy="12" r="4" fill="#f0c830" stroke="#a08010" stroke-width="0.6"/></svg>
<span class="t" style="left:148px;top:336px;font-size:12px;line-height:12px;color:#800080;font-weight:normal;">Служебные уходы</span>
<svg style="left:130px;top:353px" width="16" height="17" viewBox="0 0 16 17"><path d="M2 2L8 1L11 5L15 7L12 16L7 12L4 7Z" fill="#3a9a3a" stroke="#1a5a1a" stroke-width="0.7"/><path d="M5 4L9 9" stroke="#8ad88a" stroke-width="1.5"/></svg>
<span class="t" style="left:147px;top:356px;font-size:12px;line-height:12px;color:#800080;font-weight:normal;letter-spacing:0.1px;">Добавить посещаемость</span>
<svg style="left:131px;top:374px" width="15" height="15" viewBox="0 0 15 15"><path d="M1 1L9 7L1 14Z" fill="#2a8a2a"/><path d="M5 4L14 8L6 14Z" fill="#4ab84a"/></svg>
<span class="t" style="left:148px;top:376px;font-size:12px;line-height:12px;color:#800080;font-weight:normal;">Коллективный уход</span>
<svg style="left:129px;top:437px" width="17" height="17" viewBox="0 0 17 17"><circle cx="8.5" cy="8.5" r="7.5" fill="#b8b8c0" stroke="#1a3ab0" stroke-width="1.6"/><circle cx="8.5" cy="8.5" r="5.5" fill="#c8c8d0"/><path d="M8.5 8.5L11 4M8.5 8.5L7 12" stroke="#2a3a6a" stroke-width="1.2"/></svg>
<span class="t" style="left:148px;top:439px;font-size:12px;line-height:12px;color:#0000ff;font-weight:normal;letter-spacing:-0.36px;">Отчеты</span>
<svg style="left:129px;top:457px" width="17" height="17" viewBox="0 0 17 17"><circle cx="5" cy="5" r="3" fill="#e8b080"/><circle cx="12" cy="6" r="3" fill="#e8b080"/><path d="M0 16Q1 9 5 9Q9 9 9 16Z" fill="#3a9a3a"/><path d="M7 17Q8 10 12 10Q16 10 17 17Z" fill="#2a5ab0"/><path d="M9 4Q12 1 15 4" stroke="#111" stroke-width="2" fill="none"/></svg>
<span class="t" style="left:148px;top:459px;font-size:12px;line-height:12px;color:#0000ff;font-weight:normal;letter-spacing:0.05px;">Поиск на работе</span>
<span class="t" style="left:345px;top:314px;font-size:11px;line-height:11px;color:#000;font-weight:normal;">Правил</span>
<span class="t" style="left:347px;top:519px;font-size:11px;line-height:11px;color:#000;font-weight:normal;">Праздн</span>
<div style="left:339px;top:331px;width:60px;height:82px;border:3px solid #e0a12e;border-radius:12px;background:linear-gradient(180deg,#ffffff 0%,#ffffff 12%,#eceae8 16%,#e4e2e0 50%,#f0efee 85%,#ffffff 100%)"></div>
<svg style="left:350px;top:338px" width="40" height="66" viewBox="0 0 40 66"><defs><linearGradient id="fg" x1="0" y1="0" x2="0.3" y2="1"><stop offset="0" stop-color="#d8e6fb"/><stop offset="0.55" stop-color="#a9cbf5"/><stop offset="0.6" stop-color="#7fb6f2"/><stop offset="1" stop-color="#5aa2ee"/></linearGradient></defs><path d="M2 22L16 17L19 12L28 9L31 12L40 9V58L15 66Z" fill="#fafafa" stroke="#d8d8d8"/><path d="M7 28L40 17V56L18 65Z" fill="url(#fg)" stroke="#4a90e0" stroke-width="0.8"/><rect x="36" y="37" width="6" height="9" rx="2" fill="#c8c8c8"/></svg>
<div style="left:339px;top:428px;width:60px;height:82px;border:3px solid #e0a12e;border-radius:12px;background:linear-gradient(180deg,#ffffff 0%,#ffffff 12%,#eceae8 16%,#e4e2e0 50%,#f0efee 85%,#ffffff 100%)"></div>
<svg style="left:350px;top:435px" width="40" height="66" viewBox="0 0 40 66"><defs><linearGradient id="fg" x1="0" y1="0" x2="0.3" y2="1"><stop offset="0" stop-color="#d8e6fb"/><stop offset="0.55" stop-color="#a9cbf5"/><stop offset="0.6" stop-color="#7fb6f2"/><stop offset="1" stop-color="#5aa2ee"/></linearGradient></defs><path d="M2 22L16 17L19 12L28 9L31 12L40 9V58L15 66Z" fill="#fafafa" stroke="#d8d8d8"/><path d="M7 28L40 17V56L18 65Z" fill="url(#fg)" stroke="#4a90e0" stroke-width="0.8"/><rect x="36" y="37" width="6" height="9" rx="2" fill="#c8c8c8"/></svg>
<div style="left:384px;top:109px;width:900px;height:550px;background:#ece9d8"></div>
<div style="left:384px;top:109px;width:899px;height:1px;background:#d4d0c8"></div>
<div style="left:384px;top:109px;width:1px;height:549px;background:#d4d0c8"></div>
<div style="left:385px;top:110px;width:897px;height:1px;background:#fff"></div>
<div style="left:385px;top:110px;width:1px;height:547px;background:#fff"></div>
<div style="left:1283px;top:109px;width:1px;height:550px;background:#404040"></div>
<div style="left:384px;top:658px;width:900px;height:1px;background:#404040"></div>
<div style="left:1282px;top:110px;width:1px;height:548px;background:#808080"></div>
<div style="left:385px;top:657px;width:898px;height:1px;background:#808080"></div>
<div style="left:386px;top:111px;width:896px;height:2px;background:#d4d0c8"></div>
<div style="left:386px;top:111px;width:2px;height:546px;background:#d4d0c8"></div>
<div style="left:1280px;top:111px;width:2px;height:546px;background:#d4d0c8"></div>
<div style="left:386px;top:655px;width:896px;height:2px;background:#d4d0c8"></div>
<div style="left:388px;top:113px;width:892px;height:18px;background:#0a246a"></div>
<svg style="left:390px;top:113px" width="17" height="17" viewBox="0 0 17 17"><path d="M8.5 0.8L16.2 8.5L8.5 16.2L0.8 8.5Z" fill="#f6f2e0" stroke="#000" stroke-width="1.4"/><path d="M6 8Q9 5 13 8L12 11Q9 12 7 10Z" fill="#e87820"/><circle cx="8" cy="8" r="1.5" fill="#fff"/></svg>
<span class="t" style="left:407px;top:117px;font-size:11.8px;line-height:11.8px;color:#fff;font-weight:bold;letter-spacing:0px">Расписания для сотрудников</span>
<div style="left:1228px;top:115px;width:16px;height:14px;background:#d4d0c8;border-top:1px solid #fff;border-left:1px solid #fff;border-right:1px solid #404040;border-bottom:1px solid #404040;box-shadow:inset -1px -1px 0 #808080"></div>
<div style="left:1244px;top:115px;width:16px;height:14px;background:#d4d0c8;border-top:1px solid #fff;border-left:1px solid #fff;border-right:1px solid #404040;border-bottom:1px solid #404040;box-shadow:inset -1px -1px 0 #808080"></div>
<div style="left:1262px;top:115px;width:16px;height:14px;background:#d4d0c8;border-top:1px solid #fff;border-left:1px solid #fff;border-right:1px solid #404040;border-bottom:1px solid #404040;box-shadow:inset -1px -1px 0 #808080"></div>
<svg style="left:1231px;top:118px" width="9" height="9" viewBox="0 0 9 9"><path d="M1 7.5H6" stroke="#000" stroke-width="2"/></svg>
<svg style="left:1247px;top:117px" width="10" height="10" viewBox="0 0 10 10"><rect x="1" y="1.5" width="8" height="7" fill="none" stroke="#000"/><path d="M1 1.5H9" stroke="#000" stroke-width="2"/></svg>
<svg style="left:1265px;top:117px" width="10" height="10" viewBox="0 0 10 10"><path d="M1.5 1.5L8.5 8.5M8.5 1.5L1.5 8.5" stroke="#000" stroke-width="1.6"/></svg>
<span class="t" style="left:393px;top:137px;font-size:11px;line-height:11px;color:#000;font-weight:normal;letter-spacing:-0.33px;">Отделы:</span>
<svg style="left:527px;top:133px" width="21" height="20" viewBox="0 0 21 20"><ellipse cx="6" cy="7.5" rx="5" ry="6" fill="#000"/><ellipse cx="9.5" cy="7" rx="5" ry="5" fill="#4a4a4a"/><path d="M9 9L12 5.5L14 8L13.5 12L11 14H7Z" fill="#f4f4f4"/><path d="M1 13.5H5V15H1Z" fill="#e00000"/><path d="M4 14.5H13V17H4Z" fill="#e0a070"/><path d="M4 17.5H14" stroke="#000"/><rect x="14.5" y="1.5" width="3" height="5.5" fill="none" stroke="#0010ff" stroke-width="1.2"/><path d="M12 8H16V12H14V17M16 8V10" fill="none" stroke="#0010ff" stroke-width="1.2"/></svg>
<div style="left:392px;top:155px;width:177px;height:167px;background:#fff;border:1px solid #aca899"></div>
<svg style="left:395px;top:158px" width="14" height="14" viewBox="0 0 14 14"><path d="M0.5 7L7 1L13.5 7" fill="none" stroke="#2a78e0" stroke-width="2.2"/><path d="M2 1.5V5" stroke="#556" stroke-width="1.4"/><path d="M3 6.5L7 3L11 6.5V12H3Z" fill="#f4f4f4" stroke="#778" stroke-width="0.8"/><path d="M6 12V8.5H8.5V12" fill="#bbb"/><path d="M0 11Q3 9.5 7 11.5Q10 9.5 14 11V14H0Z" fill="#30a030"/></svg>
<div style="left:413px;top:157px;width:79px;height:16px;background:#d4d0c8"></div>
<span class="t" style="left:415px;top:160px;font-size:11px;line-height:11px;color:#000;font-weight:normal;letter-spacing:-0.22px;">KazMosBuilding</span>
<div style="left:570px;top:134px;width:703px;height:199px;border:5px solid #ec1c24;background:transparent;z-index:5"></div>
<span class="t" style="left:577px;top:138px;font-size:11px;line-height:11px;color:#000;font-weight:normal;letter-spacing:-0.3px;">Сотрудники:</span>
<div style="left:895px;top:138px;width:13px;height:13px;background:linear-gradient(135deg,#dcdcd7,#ffffff);border:1px solid #1c5180"></div>
<span class="t" style="left:910px;top:140px;font-size:11px;line-height:11px;color:#000;font-weight:normal;">Конструктор отчетов</span>
<svg style="left:1034px;top:137px" width="19" height="16" viewBox="0 0 19 16"><circle cx="6" cy="6" r="4.5" fill="#222"/><path d="M3 5Q6 2 9 5V9H3Z" fill="#f0d0b0"/><path d="M1 12Q6 8 11 12V15H1Z" fill="#d02020"/><rect x="13" y="0.5" width="4" height="5" fill="none" stroke="#1a3aff" stroke-width="1.3"/><rect x="10.5" y="8" width="4" height="5" fill="none" stroke="#1a3aff" stroke-width="1.3"/></svg>
<span class="t" style="left:1058px;top:140px;font-size:11px;line-height:11px;color:#000;font-weight:normal;">Назначить график</span>
<svg style="left:1178px;top:138px" width="17" height="15" viewBox="0 0 17 15"><rect x="1" y="1" width="15" height="11" fill="#f0f0f0" stroke="#555"/><path d="M3 3H6M11 3H14" stroke="#d02020" stroke-width="1.5"/><rect x="6" y="6" width="6" height="8" fill="#fff" stroke="#8a5a20" stroke-width="1.4"/></svg>
<svg style="left:1205px;top:138px" width="18" height="14" viewBox="0 0 18 14"><path d="M2 6Q2 2 9 2Q16 2 16 6V11H2Z" fill="#fff" stroke="#000" stroke-width="1.5"/><path d="M2 6H16M2 8.5H16" stroke="#000"/><rect x="11" y="7" width="3" height="1.5" fill="#f0c030"/></svg>
<svg style="left:1233px;top:140px" width="15" height="12" viewBox="0 0 15 12"><path d="M1 6L5.5 10.5L14 1.5" fill="none" stroke="#2a7ae0" stroke-width="2.4"/></svg>
<svg style="left:1259px;top:138px" width="12" height="13" viewBox="0 0 12 13"><path d="M1 1L11 12M11 1L1 12" stroke="#e81818" stroke-width="2"/></svg>
<div style="left:577px;top:156px;width:698px;height:165px;background:#fff;border:1px solid #aca899"></div>
<div style="left:578px;top:157px;width:680px;height:60px;background:#ece9d8"></div>
<div style="left:578px;top:157px;width:680px;height:1px;background:#fff"></div>
<div style="left:578px;top:157px;width:2px;height:58px;background:#fff"></div>
<div style="left:603px;top:158px;width:1px;height:58px;background:#808080"></div>
<div style="left:604px;top:157px;width:1px;height:60px;background:#000"></div>
<div style="left:605px;top:158px;width:1px;height:58px;background:#fff"></div>
<div style="left:680px;top:158px;width:1px;height:58px;background:#808080"></div>
<div style="left:681px;top:157px;width:1px;height:60px;background:#000"></div>
<div style="left:682px;top:158px;width:1px;height:58px;background:#fff"></div>
<div style="left:757px;top:158px;width:1px;height:58px;background:#808080"></div>
<div style="left:758px;top:157px;width:1px;height:60px;background:#000"></div>
<div style="left:759px;top:158px;width:1px;height:58px;background:#fff"></div>
<div style="left:912px;top:158px;width:1px;height:58px;background:#808080"></div>
<div style="left:913px;top:157px;width:1px;height:60px;background:#000"></div>
<div style="left:914px;top:158px;width:1px;height:58px;background:#fff"></div>
<div style="left:1013px;top:158px;width:1px;height:58px;background:#808080"></div>
<div style="left:1014px;top:157px;width:1px;height:60px;background:#000"></div>
<div style="left:1015px;top:158px;width:1px;height:58px;background:#fff"></div>
<div style="left:1232px;top:158px;width:1px;height:58px;background:#808080"></div>
<div style="left:1233px;top:157px;width:1px;height:60px;background:#000"></div>
<div style="left:1234px;top:158px;width:1px;height:58px;background:#fff"></div>
<div style="left:1090px;top:181px;width:1px;height:35px;background:#808080"></div>
<div style="left:1091px;top:181px;width:1px;height:36px;background:#000"></div>
<div style="left:1092px;top:181px;width:1px;height:35px;background:#fff"></div>
<div style="left:1167px;top:181px;width:1px;height:35px;background:#808080"></div>
<div style="left:1168px;top:181px;width:1px;height:36px;background:#000"></div>
<div style="left:1169px;top:181px;width:1px;height:35px;background:#fff"></div>
<div style="left:1015px;top:179px;width:218px;height:1px;background:#808080"></div>
<div style="left:1015px;top:180px;width:219px;height:1px;background:#000"></div>
<div style="left:1015px;top:181px;width:218px;height:1px;background:#fff"></div>
<div style="left:1235px;top:192px;width:23px;height:1px;background:#808080"></div>
<div style="left:1234px;top:193px;width:24px;height:1px;background:#000"></div>
<div style="left:1235px;top:194px;width:23px;height:1px;background:#fff"></div>
<div style="left:578px;top:215px;width:680px;height:1px;background:#808080"></div>
<div style="left:578px;top:216px;width:680px;height:1px;background:#000"></div>
<div style="left:1257px;top:157px;width:1px;height:59px;background:#fff"></div>
<span class="t" style="left:605px;width:76px;text-align:center;top:182px;font-size:12px;line-height:12px;color:#000;font-weight:normal;transform:scaleX(0.92);transform-origin:50% 0;">№ СУРВ</span>
<span class="t" style="left:682px;width:76px;text-align:center;top:182px;font-size:12px;line-height:12px;color:#000;font-weight:normal;transform:scaleX(0.92);transform-origin:50% 0;">Имя</span>
<span class="t" style="left:759px;width:154px;text-align:center;top:182px;font-size:12px;line-height:12px;color:#000;font-weight:normal;transform:scaleX(0.92);transform-origin:50% 0;">Фамилия</span>
<span class="t" style="left:914px;width:100px;text-align:center;top:182px;font-size:12px;line-height:12px;color:#000;font-weight:normal;transform:scaleX(0.92);transform-origin:50% 0;">Рабочий график</span>
<span class="t" style="left:1015px;width:218px;text-align:center;top:164px;font-size:12px;line-height:12px;color:#000;font-weight:normal;transform:scaleX(0.92);transform-origin:50% 0;">Текущая смена</span>
<span class="t" style="left:1015px;width:76px;text-align:center;top:193px;font-size:12px;line-height:12px;color:#000;font-weight:normal;transform:scaleX(0.92);transform-origin:50% 0;">Начало</span>
<span class="t" style="left:1092px;width:76px;text-align:center;top:193px;font-size:12px;line-height:12px;color:#000;font-weight:normal;transform:scaleX(0.92);transform-origin:50% 0;">Конец</span>
<span class="t" style="left:1169px;width:64px;text-align:center;top:187px;font-size:12px;line-height:12px;color:#000;font-weight:normal;transform:scaleX(0.92);transform-origin:50% 0;">Временная</span>
<span class="t" style="left:1169px;width:64px;text-align:center;top:199px;font-size:12px;line-height:12px;color:#000;font-weight:normal;transform:scaleX(0.92);transform-origin:50% 0;">смена</span>
<span class="t" style="left:1252px;top:198px;font-size:12px;line-height:12px;color:#000;font-weight:normal;transform:scaleX(0.92);transform-origin:0 0;">Н</span>
<div style="left:605px;top:217px;width:653px;height:18px;background:#d4d0c8"></div>
<div style="left:578px;top:217px;width:26px;height:17px;background:#404040"></div>
<div style="left:603px;top:217px;width:1px;height:17px;background:#d4d0c8"></div>
<div style="left:578px;top:234px;width:26px;height:1px;background:#000"></div>
<span class="t" style="left:585px;top:220px;font-size:12px;line-height:12px;color:#fff;font-weight:normal;transform:scaleX(0.92);transform-origin:0 0;">3</span>
<div style="left:604px;top:217px;width:1px;height:18px;background:#000"></div>
<div style="left:605px;top:234px;width:653px;height:1px;background:#c8c6cc"></div>
<div style="left:681px;top:217px;width:1px;height:18px;background:#c8c6cc"></div>
<div style="left:758px;top:217px;width:1px;height:18px;background:#c8c6cc"></div>
<div style="left:913px;top:217px;width:1px;height:18px;background:#c8c6cc"></div>
<div style="left:1014px;top:217px;width:1px;height:18px;background:#c8c6cc"></div>
<div style="left:1091px;top:217px;width:1px;height:18px;background:#c8c6cc"></div>
<div style="left:1168px;top:217px;width:1px;height:18px;background:#c8c6cc"></div>
<div style="left:1233px;top:217px;width:1px;height:18px;background:#c8c6cc"></div>
<span class="t" style="left:607px;top:220px;font-size:12px;line-height:12px;color:#000;font-weight:normal;transform:scaleX(0.92);transform-origin:0 0;">11</span>
<span class="t" style="left:684px;top:220px;font-size:12px;line-height:12px;color:#000;font-weight:normal;transform:scaleX(0.92);transform-origin:0 0;">Лосев</span>
<span class="t" style="left:761px;top:220px;font-size:12px;line-height:12px;color:#000;font-weight:normal;transform:scaleX(0.92);transform-origin:0 0;">Сергей</span>
<span class="t" style="left:916px;top:220px;font-size:12px;line-height:12px;color:#000;font-weight:normal;transform:scaleX(0.82);transform-origin:0 0;">DAS</span>
<span class="t" style="left:1017px;top:220px;font-size:12px;line-height:12px;color:#000;font-weight:normal;transform:scaleX(0.92);transform-origin:0 0;">23.11.2015</span>
<span class="t" style="left:1094px;top:220px;font-size:12px;line-height:12px;color:#000;font-weight:normal;transform:scaleX(0.92);transform-origin:0 0;">25.11.2060</span>
<span class="t" style="left:1237px;top:220px;font-size:12px;line-height:12px;color:#000;font-weight:normal;transform:scaleX(0.92);transform-origin:0 0;">01.1</span>
<div style="left:1195px;top:220px;width:12px;height:12px;background:#fff;border-top:2px solid #404040;border-left:2px solid #404040;border-right:1px solid #d4d0c8;border-bottom:1px solid #d4d0c8"></div>
<div style="left:605px;top:235px;width:653px;height:18px;background:#808080"></div>
<div style="left:578px;top:235px;width:26px;height:17px;background:#404040"></div>
<div style="left:603px;top:235px;width:1px;height:17px;background:#d4d0c8"></div>
<div style="left:578px;top:252px;width:26px;height:1px;background:#000"></div>
<span class="t" style="left:585px;top:238px;font-size:12px;line-height:12px;color:#fff;font-weight:normal;transform:scaleX(0.92);transform-origin:0 0;">4</span>
<svg style="left:595px;top:239px" width="6" height="10" viewBox="0 0 6 10"><path d="M0 0L6 5L0 10Z" fill="#fff"/></svg>
<div style="left:604px;top:235px;width:1px;height:18px;background:#000"></div>
<div style="left:605px;top:252px;width:653px;height:1px;background:#c8c6cc"></div>
<div style="left:681px;top:235px;width:1px;height:18px;background:#c8c6cc"></div>
<div style="left:758px;top:235px;width:1px;height:18px;background:#c8c6cc"></div>
<div style="left:913px;top:235px;width:1px;height:18px;background:#c8c6cc"></div>
<div style="left:1014px;top:235px;width:1px;height:18px;background:#c8c6cc"></div>
<div style="left:1091px;top:235px;width:1px;height:18px;background:#c8c6cc"></div>
<div style="left:1168px;top:235px;width:1px;height:18px;background:#c8c6cc"></div>
<div style="left:1233px;top:235px;width:1px;height:18px;background:#c8c6cc"></div>
<span class="t" style="left:607px;top:238px;font-size:12px;line-height:12px;color:#fff;font-weight:normal;transform:scaleX(0.92);transform-origin:0 0;">12</span>
<span class="t" style="left:684px;top:238px;font-size:12px;line-height:12px;color:#fff;font-weight:normal;transform:scaleX(0.92);transform-origin:0 0;">Калюжный</span>
<span class="t" style="left:761px;top:238px;font-size:12px;line-height:12px;color:#fff;font-weight:normal;transform:scaleX(0.92);transform-origin:0 0;">Константин</span>
<span class="t" style="left:916px;top:238px;font-size:12px;line-height:12px;color:#fff;font-weight:normal;transform:scaleX(0.82);transform-origin:0 0;">DAS</span>
<span class="t" style="left:1017px;top:238px;font-size:12px;line-height:12px;color:#fff;font-weight:normal;transform:scaleX(0.92);transform-origin:0 0;">23.11.2015</span>
<span class="t" style="left:1094px;top:238px;font-size:12px;line-height:12px;color:#fff;font-weight:normal;transform:scaleX(0.92);transform-origin:0 0;">25.11.2060</span>
<span class="t" style="left:1237px;top:238px;font-size:12px;line-height:12px;color:#fff;font-weight:normal;transform:scaleX(0.92);transform-origin:0 0;">01.1</span>
<div style="left:1195px;top:238px;width:12px;height:12px;background:#fff;border-top:2px solid #404040;border-left:2px solid #404040;border-right:1px solid #d4d0c8;border-bottom:1px solid #d4d0c8"></div>
<div style="left:605px;top:253px;width:653px;height:18px;background:#fff"></div>
<div style="left:578px;top:253px;width:26px;height:17px;background:#ece9d8"></div>
<div style="left:579px;top:253px;width:24px;height:1px;background:#fff"></div>
<div style="left:579px;top:253px;width:1px;height:16px;background:#fff"></div>
<div style="left:603px;top:253px;width:1px;height:17px;background:#808080"></div>
<div style="left:579px;top:269px;width:25px;height:1px;background:#808080"></div>
<div style="left:578px;top:270px;width:27px;height:1px;background:#000"></div>
<span class="t" style="left:585px;top:256px;font-size:12px;line-height:12px;color:#000;font-weight:normal;transform:scaleX(0.92);transform-origin:0 0;">5</span>
<div style="left:604px;top:253px;width:1px;height:18px;background:#000"></div>
<div style="left:605px;top:270px;width:653px;height:1px;background:#c8c6cc"></div>
<div style="left:681px;top:253px;width:1px;height:18px;background:#c8c6cc"></div>
<div style="left:758px;top:253px;width:1px;height:18px;background:#c8c6cc"></div>
<div style="left:913px;top:253px;width:1px;height:18px;background:#c8c6cc"></div>
<div style="left:1014px;top:253px;width:1px;height:18px;background:#c8c6cc"></div>
<div style="left:1091px;top:253px;width:1px;height:18px;background:#c8c6cc"></div>
<div style="left:1168px;top:253px;width:1px;height:18px;background:#c8c6cc"></div>
<div style="left:1233px;top:253px;width:1px;height:18px;background:#c8c6cc"></div>
<span class="t" style="left:607px;top:256px;font-size:12px;line-height:12px;color:#000;font-weight:normal;transform:scaleX(0.92);transform-origin:0 0;">13</span>
<span class="t" style="left:684px;top:256px;font-size:12px;line-height:12px;color:#000;font-weight:normal;transform:scaleX(0.92);transform-origin:0 0;">Александров</span>
<span class="t" style="left:761px;top:256px;font-size:12px;line-height:12px;color:#000;font-weight:normal;transform:scaleX(0.92);transform-origin:0 0;">Андрей</span>
<span class="t" style="left:916px;top:256px;font-size:12px;line-height:12px;color:#000;font-weight:normal;transform:scaleX(0.9);transform-origin:0 0;">Nightest</span>
<span class="t" style="left:1017px;top:256px;font-size:12px;line-height:12px;color:#000;font-weight:normal;transform:scaleX(0.92);transform-origin:0 0;">11.01.2015</span>
<span class="t" style="left:1094px;top:256px;font-size:12px;line-height:12px;color:#000;font-weight:normal;transform:scaleX(0.92);transform-origin:0 0;">01.01.2017</span>
<span class="t" style="left:1237px;top:256px;font-size:12px;line-height:12px;color:#000;font-weight:normal;transform:scaleX(0.92);transform-origin:0 0;">01.1</span>
<div style="left:1195px;top:256px;width:12px;height:12px;background:#fff;border-top:2px solid #404040;border-left:2px solid #404040;border-right:1px solid #d4d0c8;border-bottom:1px solid #d4d0c8"></div>
<div style="left:605px;top:271px;width:653px;height:18px;background:#fff"></div>
<div style="left:578px;top:271px;width:26px;height:17px;background:#ece9d8"></div>
<div style="left:579px;top:271px;width:24px;height:1px;background:#fff"></div>
<div style="left:579px;top:271px;width:1px;height:16px;background:#fff"></div>
<div style="left:603px;top:271px;width:1px;height:17px;background:#808080"></div>
<div style="left:579px;top:287px;width:25px;height:1px;background:#808080"></div>
<div style="left:578px;top:288px;width:27px;height:1px;background:#000"></div>
<span class="t" style="left:585px;top:274px;font-size:12px;line-height:12px;color:#000;font-weight:normal;transform:scaleX(0.92);transform-origin:0 0;">6</span>
<div style="left:604px;top:271px;width:1px;height:18px;background:#000"></div>
<div style="left:605px;top:288px;width:653px;height:1px;background:#c8c6cc"></div>
<div style="left:681px;top:271px;width:1px;height:18px;background:#c8c6cc"></div>
<div style="left:758px;top:271px;width:1px;height:18px;background:#c8c6cc"></div>
<div style="left:913px;top:271px;width:1px;height:18px;background:#c8c6cc"></div>
<div style="left:1014px;top:271px;width:1px;height:18px;background:#c8c6cc"></div>
<div style="left:1091px;top:271px;width:1px;height:18px;background:#c8c6cc"></div>
<div style="left:1168px;top:271px;width:1px;height:18px;background:#c8c6cc"></div>
<div style="left:1233px;top:271px;width:1px;height:18px;background:#c8c6cc"></div>
<span class="t" style="left:607px;top:274px;font-size:12px;line-height:12px;color:#000;font-weight:normal;transform:scaleX(0.92);transform-origin:0 0;">14</span>
<span class="t" style="left:684px;top:274px;font-size:12px;line-height:12px;color:#000;font-weight:normal;transform:scaleX(0.92);transform-origin:0 0;">Попов</span>
<span class="t" style="left:761px;top:274px;font-size:12px;line-height:12px;color:#000;font-weight:normal;transform:scaleX(0.92);transform-origin:0 0;">Виктор</span>
<span class="t" style="left:916px;top:274px;font-size:12px;line-height:12px;color:#000;font-weight:normal;transform:scaleX(0.9);transform-origin:0 0;"></span>
<span class="t" style="left:1017px;top:274px;font-size:12px;line-height:12px;color:#000;font-weight:normal;transform:scaleX(0.92);transform-origin:0 0;"></span>
<span class="t" style="left:1094px;top:274px;font-size:12px;line-height:12px;color:#000;font-weight:normal;transform:scaleX(0.92);transform-origin:0 0;"></span>
<span class="t" style="left:1237px;top:274px;font-size:12px;line-height:12px;color:#000;font-weight:normal;transform:scaleX(0.92);transform-origin:0 0;"></span>
<div style="left:1195px;top:274px;width:12px;height:12px;background:#fff;border-top:2px solid #404040;border-left:2px solid #404040;border-right:1px solid #d4d0c8;border-bottom:1px solid #d4d0c8"></div>
<div style="left:1258px;top:157px;width:17px;height:147px;background:#f8f7f2"></div>
<div style="left:1258px;top:304px;width:17px;height:16px;background:#ece9d8"></div>
<div style="left:1259px;top:160px;width:14px;height:14px;background:linear-gradient(180deg,#c8d8fc,#b4c8f4);border-radius:2px;border:1px solid #fff"></div>
<svg style="left:1262px;top:163px" width="9" height="7" viewBox="0 0 9 7"><path d="M1 5.5L4.5 2L8 5.5" fill="none" stroke="#4d6185" stroke-width="2"/></svg>
<div style="left:1259px;top:176px;width:14px;height:12px;background:linear-gradient(90deg,#c8d8fc,#b4c8f4);border-radius:2px;border:1px solid #fff"></div>
<div style="left:1259px;top:290px;width:14px;height:14px;background:linear-gradient(180deg,#c8d8fc,#b4c8f4);border-radius:2px;border:1px solid #fff"></div>
<svg style="left:1262px;top:294px" width="9" height="7" viewBox="0 0 9 7"><path d="M1 1.5L4.5 5L8 1.5" fill="none" stroke="#4d6185" stroke-width="2"/></svg>
<div style="left:579px;top:304px;width:679px;height:16px;background:#fbfbf8"></div>
<div style="left:581px;top:305px;width:14px;height:14px;background:linear-gradient(180deg,#c8d8fc,#b4c8f4);border-radius:2px;border:1px solid #fff"></div>
<svg style="left:584px;top:308px" width="7" height="9" viewBox="0 0 7 9"><path d="M5.5 1L2 4.5L5.5 8" fill="none" stroke="#4d6185" stroke-width="2"/></svg>
<div style="left:596px;top:305px;width:488px;height:14px;background:linear-gradient(180deg,#cddcfc 0%,#bacffa 60%,#b0c6f4 100%);border-radius:2px;border:1px solid #fff"></div>
<svg style="left:833px;top:308px" width="10" height="8" viewBox="0 0 10 8"><path d="M1 1V7M3.5 1V7M6 1V7M8.5 1V7" stroke="#8aa4d8"/></svg>
<div style="left:1243px;top:305px;width:14px;height:14px;background:linear-gradient(180deg,#c8d8fc,#b4c8f4);border-radius:2px;border:1px solid #fff"></div>
<svg style="left:1246px;top:308px" width="7" height="9" viewBox="0 0 7 9"><path d="M1.5 1L5 4.5L1.5 8" fill="none" stroke="#4d6185" stroke-width="2"/></svg>
<div style="left:390px;top:334px;width:889px;height:35px;border:1px solid #d0d0bf;border-radius:5px"></div>
<div style="left:396px;top:331px;width:88px;height:10px;background:#ece9d8"></div>
<span class="t" style="left:397px;top:331px;font-size:11px;line-height:11px;color:#000;font-weight:normal;letter-spacing:-0.14px;">Период времени</span>
<span class="t" style="left:414px;top:349px;font-size:11px;line-height:11px;color:#000;font-weight:normal;">С</span>
<div style="left:428px;top:343px;width:97px;height:21px;background:#fff;border:1px solid #aca899"></div>
<span class="t" style="left:432px;top:349px;font-size:11px;line-height:11px;color:#000;font-weight:normal;">01.11.2015</span>
<div style="left:509px;top:345px;width:15px;height:17px;background:linear-gradient(180deg,#c6d6fc,#b2c6f6);border-radius:2px"></div>
<svg style="left:512px;top:350px" width="9" height="6" viewBox="0 0 9 6"><path d="M1 1L4.5 4.5L8 1" fill="none" stroke="#4d6185" stroke-width="2"/></svg>
<div style="left:561px;top:343px;width:97px;height:21px;background:#fff;border:1px solid #aca899"></div>
<span class="t" style="left:565px;top:349px;font-size:11px;line-height:11px;color:#000;font-weight:normal;">30.11.2015</span>
<div style="left:642px;top:345px;width:15px;height:17px;background:linear-gradient(180deg,#c6d6fc,#b2c6f6);border-radius:2px"></div>
<svg style="left:645px;top:350px" width="9" height="6" viewBox="0 0 9 6"><path d="M1 1L4.5 4.5L8 1" fill="none" stroke="#4d6185" stroke-width="2"/></svg>
<span class="t" style="left:536px;top:349px;font-size:11px;line-height:11px;color:#000;font-weight:normal;">По</span>
<svg style="left:889px;top:346px" width="16" height="16" viewBox="0 0 16 16"><rect x="0.5" y="1.5" width="12" height="14" fill="#fff" stroke="#000"/><path d="M2.5 4.5H10M2.5 7H10M2.5 9.5H10M2.5 12H10" stroke="#3a3ab0" stroke-width="1.2"/><path d="M7 11L14 2L15.5 3.5L8.5 12.5Z" fill="#f0c030" stroke="#000" stroke-width="0.7"/><circle cx="15" cy="2" r="1.5" fill="#e02020"/></svg>
<span class="t" style="left:910px;top:349px;font-size:11px;line-height:11px;color:#000;font-weight:normal;">Временный график</span>
<svg style="left:1034px;top:346px" width="17" height="16" viewBox="0 0 17 16"><rect x="7.5" y="1.5" width="6" height="7" fill="#fff" stroke="#333"/><rect x="8" y="8" width="8" height="4" fill="#f0e060" stroke="#333"/><path d="M1 10L6 15M6 10L1 15" stroke="#e02020" stroke-width="1.5"/></svg>
<svg style="left:1080px;top:345px" width="14" height="16" viewBox="0 0 14 16"><rect x="0.5" y="0.5" width="13" height="15" fill="#fff" stroke="#000" stroke-width="1.4"/><rect x="3" y="9" width="8" height="6" fill="#fff" stroke="#000"/><path d="M7 2V7M5 5L7 7L9 5" stroke="#2a5ab0" fill="none" stroke-width="1.2"/></svg>
<span class="t" style="left:1098px;top:349px;font-size:11px;line-height:11px;color:#9a9a9a;font-weight:normal;">Save</span>
<svg style="left:1153px;top:346px" width="14" height="14" viewBox="0 0 14 14"><path d="M1.5 1.5L12.5 12.5" stroke="#000" stroke-width="1.4"/><path d="M12.5 1.5L1.5 12.5" stroke="#000" stroke-width="2.4"/></svg>
<svg style="left:1193px;top:348px" width="10" height="10" viewBox="0 0 10 10"><path d="M3.5 0.5H6.5V3.5H9.5V6.5H6.5V9.5H3.5V6.5H0.5V3.5H3.5Z" fill="#fff" stroke="#000"/></svg>
<div style="left:1219px;top:352px;width:11px;height:4px;background:#fff;border:1px solid #000"></div>
<svg style="left:1249px;top:345px" width="18" height="17" viewBox="0 0 18 17"><rect x="4" y="3" width="10" height="12" fill="#ddd" stroke="#000" stroke-width="1.2"/><path d="M6 6H12M6 9H12M6 12H12" stroke="#333"/><path d="M1 16L17 1M1 1L17 16" stroke="#2a3a5a" stroke-width="1.2"/></svg>
<div style="left:388px;top:370px;width:890px;height:284px;background:#fff"></div>
<div style="left:388px;top:370px;width:890px;height:1px;background:#aca899"></div>
<div style="left:388px;top:371px;width:890px;height:1px;background:#fff"></div>
<div style="left:390px;top:372px;width:872px;height:18px;background:#d4d0c8"></div>
<div style="left:455px;top:390px;width:807px;height:1px;background:#000"></div>
<span class="t" style="left:440px;width:30px;text-align:center;top:377px;font-size:12px;line-height:12px;color:#000;font-weight:normal;transform:scaleX(0.85);transform-origin:50% 0;">0</span>
<span class="t" style="left:474px;width:30px;text-align:center;top:377px;font-size:12px;line-height:12px;color:#000;font-weight:normal;transform:scaleX(0.85);transform-origin:50% 0;">1</span>
<div style="left:489px;top:391px;width:1px;height:262px;background:#858388"></div>
<span class="t" style="left:507px;width:30px;text-align:center;top:377px;font-size:12px;line-height:12px;color:#000;font-weight:normal;transform:scaleX(0.85);transform-origin:50% 0;">2</span>
<div style="left:522px;top:391px;width:1px;height:262px;background:#858388"></div>
<span class="t" style="left:541px;width:30px;text-align:center;top:377px;font-size:12px;line-height:12px;color:#000;font-weight:normal;transform:scaleX(0.85);transform-origin:50% 0;">3</span>
<div style="left:556px;top:391px;width:1px;height:262px;background:#858388"></div>
<span class="t" style="left:575px;width:30px;text-align:center;top:377px;font-size:12px;line-height:12px;color:#000;font-weight:normal;transform:scaleX(0.85);transform-origin:50% 0;">4</span>
<div style="left:590px;top:391px;width:1px;height:262px;background:#858388"></div>
<span class="t" style="left:608px;width:30px;text-align:center;top:377px;font-size:12px;line-height:12px;color:#000;font-weight:normal;transform:scaleX(0.85);transform-origin:50% 0;">5</span>
<div style="left:623px;top:391px;width:1px;height:262px;background:#858388"></div>
<span class="t" style="left:642px;width:30px;text-align:center;top:377px;font-size:12px;line-height:12px;color:#000;font-weight:normal;transform:scaleX(0.85);transform-origin:50% 0;">6</span>
<div style="left:657px;top:391px;width:1px;height:262px;background:#858388"></div>
<span class="t" style="left:675px;width:30px;text-align:center;top:377px;font-size:12px;line-height:12px;color:#000;font-weight:normal;transform:scaleX(0.85);transform-origin:50% 0;">7</span>
<div style="left:690px;top:391px;width:1px;height:262px;background:#858388"></div>
<span class="t" style="left:709px;width:30px;text-align:center;top:377px;font-size:12px;line-height:12px;color:#000;font-weight:normal;transform:scaleX(0.85);transform-origin:50% 0;">8</span>
<div style="left:724px;top:391px;width:1px;height:262px;background:#858388"></div>
<span class="t" style="left:743px;width:30px;text-align:center;top:377px;font-size:12px;line-height:12px;color:#000;font-weight:normal;transform:scaleX(0.85);transform-origin:50% 0;">9</span>
<div style="left:758px;top:391px;width:1px;height:262px;background:#858388"></div>
<span class="t" style="left:776px;width:30px;text-align:center;top:377px;font-size:12px;line-height:12px;color:#000;font-weight:normal;transform:scaleX(0.85);transform-origin:50% 0;">10</span>
<div style="left:791px;top:391px;width:1px;height:262px;background:#858388"></div>
<span class="t" style="left:810px;width:30px;text-align:center;top:377px;font-size:12px;line-height:12px;color:#000;font-weight:normal;transform:scaleX(0.85);transform-origin:50% 0;">11</span>
<div style="left:825px;top:391px;width:1px;height:262px;background:#858388"></div>
<span class="t" style="left:843px;width:30px;text-align:center;top:377px;font-size:12px;line-height:12px;color:#000;font-weight:normal;transform:scaleX(0.85);transform-origin:50% 0;">12</span>
<div style="left:858px;top:391px;width:1px;height:262px;background:#858388"></div>
<span class="t" style="left:877px;width:30px;text-align:center;top:377px;font-size:12px;line-height:12px;color:#000;font-weight:normal;transform:scaleX(0.85);transform-origin:50% 0;">13</span>
<div style="left:892px;top:391px;width:1px;height:262px;background:#858388"></div>
<span class="t" style="left:911px;width:30px;text-align:center;top:377px;font-size:12px;line-height:12px;color:#000;font-weight:normal;transform:scaleX(0.85);transform-origin:50% 0;">14</span>
<div style="left:926px;top:391px;width:1px;height:262px;background:#858388"></div>
<span class="t" style="left:944px;width:30px;text-align:center;top:377px;font-size:12px;line-height:12px;color:#000;font-weight:normal;transform:scaleX(0.85);transform-origin:50% 0;">15</span>
<div style="left:959px;top:391px;width:1px;height:262px;background:#858388"></div>
<span class="t" style="left:978px;width:30px;text-align:center;top:377px;font-size:12px;line-height:12px;color:#000;font-weight:normal;transform:scaleX(0.85);transform-origin:50% 0;">16</span>
<div style="left:993px;top:391px;width:1px;height:262px;background:#858388"></div>
<span class="t" style="left:1012px;width:30px;text-align:center;top:377px;font-size:12px;line-height:12px;color:#000;font-weight:normal;transform:scaleX(0.85);transform-origin:50% 0;">17</span>
<div style="left:1027px;top:391px;width:1px;height:262px;background:#858388"></div>
<span class="t" style="left:1045px;width:30px;text-align:center;top:377px;font-size:12px;line-height:12px;color:#000;font-weight:normal;transform:scaleX(0.85);transform-origin:50% 0;">18</span>
<div style="left:1060px;top:391px;width:1px;height:262px;background:#858388"></div>
<span class="t" style="left:1079px;width:30px;text-align:center;top:377px;font-size:12px;line-height:12px;color:#000;font-weight:normal;transform:scaleX(0.85);transform-origin:50% 0;">19</span>
<div style="left:1094px;top:391px;width:1px;height:262px;background:#858388"></div>
<span class="t" style="left:1113px;width:30px;text-align:center;top:377px;font-size:12px;line-height:12px;color:#000;font-weight:normal;transform:scaleX(0.85);transform-origin:50% 0;">20</span>
<div style="left:1128px;top:391px;width:1px;height:262px;background:#858388"></div>
<span class="t" style="left:1146px;width:30px;text-align:center;top:377px;font-size:12px;line-height:12px;color:#000;font-weight:normal;transform:scaleX(0.85);transform-origin:50% 0;">21</span>
<div style="left:1161px;top:391px;width:1px;height:262px;background:#858388"></div>
<span class="t" style="left:1180px;width:30px;text-align:center;top:377px;font-size:12px;line-height:12px;color:#000;font-weight:normal;transform:scaleX(0.85);transform-origin:50% 0;">22</span>
<div style="left:1195px;top:391px;width:1px;height:262px;background:#858388"></div>
<span class="t" style="left:1213px;width:30px;text-align:center;top:377px;font-size:12px;line-height:12px;color:#000;font-weight:normal;transform:scaleX(0.85);transform-origin:50% 0;">23</span>
<div style="left:1228px;top:391px;width:1px;height:262px;background:#858388"></div>
<span class="t" style="left:1062px;width:200px;text-align:right;top:377px;font-size:12px;line-height:12px;color:#000;font-weight:normal;transform:scaleX(0.85);transform-origin:100% 0;">24</span>
<div style="left:455px;top:409px;width:807px;height:1px;background:#c9c7cc"></div>
<div style="left:390px;top:391px;width:65px;height:18px;background:#d4d0c8;border-top:1px solid #fff;border-left:1px solid #fff;border-right:1px solid #808080"></div>
<div style="left:390px;top:409px;width:65px;height:1px;background:#6a6a6a"></div>
<span class="t" style="left:390px;width:65px;text-align:center;top:394px;font-size:12px;line-height:12px;color:#000;font-weight:normal;transform:scaleX(0.91);transform-origin:50% 0;">11-01 Вс</span>
<div style="left:455px;top:428px;width:807px;height:1px;background:#c9c7cc"></div>
<div style="left:390px;top:410px;width:65px;height:18px;background:#d4d0c8;border-top:1px solid #fff;border-left:1px solid #fff;border-right:1px solid #808080"></div>
<div style="left:390px;top:428px;width:65px;height:1px;background:#6a6a6a"></div>
<span class="t" style="left:390px;width:65px;text-align:center;top:413px;font-size:12px;line-height:12px;color:#000;font-weight:normal;transform:scaleX(0.91);transform-origin:50% 0;">11-02 Пн</span>
<div style="left:455px;top:447px;width:807px;height:1px;background:#c9c7cc"></div>
<div style="left:390px;top:429px;width:65px;height:18px;background:#d4d0c8;border-top:1px solid #fff;border-left:1px solid #fff;border-right:1px solid #808080"></div>
<div style="left:390px;top:447px;width:65px;height:1px;background:#6a6a6a"></div>
<span class="t" style="left:390px;width:65px;text-align:center;top:432px;font-size:12px;line-height:12px;color:#000;font-weight:normal;transform:scaleX(0.91);transform-origin:50% 0;">11-03 Вт</span>
<div style="left:455px;top:466px;width:807px;height:1px;background:#c9c7cc"></div>
<div style="left:390px;top:448px;width:65px;height:18px;background:#d4d0c8;border-top:1px solid #fff;border-left:1px solid #fff;border-right:1px solid #808080"></div>
<div style="left:390px;top:466px;width:65px;height:1px;background:#6a6a6a"></div>
<span class="t" style="left:390px;width:65px;text-align:center;top:451px;font-size:12px;line-height:12px;color:#000;font-weight:normal;transform:scaleX(0.91);transform-origin:50% 0;">11-04 Ср</span>
<div style="left:455px;top:485px;width:807px;height:1px;background:#c9c7cc"></div>
<div style="left:390px;top:467px;width:65px;height:18px;background:#d4d0c8;border-top:1px solid #fff;border-left:1px solid #fff;border-right:1px solid #808080"></div>
<div style="left:390px;top:485px;width:65px;height:1px;background:#6a6a6a"></div>
<span class="t" style="left:390px;width:65px;text-align:center;top:470px;font-size:12px;line-height:12px;color:#000;font-weight:normal;transform:scaleX(0.91);transform-origin:50% 0;">11-05 Чт</span>
<div style="left:455px;top:504px;width:807px;height:1px;background:#c9c7cc"></div>
<div style="left:390px;top:486px;width:65px;height:18px;background:#d4d0c8;border-top:1px solid #fff;border-left:1px solid #fff;border-right:1px solid #808080"></div>
<div style="left:390px;top:504px;width:65px;height:1px;background:#6a6a6a"></div>
<span class="t" style="left:390px;width:65px;text-align:center;top:489px;font-size:12px;line-height:12px;color:#000;font-weight:normal;transform:scaleX(0.91);transform-origin:50% 0;">11-06 Пт</span>
<div style="left:455px;top:523px;width:807px;height:1px;background:#c9c7cc"></div>
<div style="left:390px;top:505px;width:65px;height:18px;background:#d4d0c8;border-top:1px solid #fff;border-left:1px solid #fff;border-right:1px solid #808080"></div>
<div style="left:390px;top:523px;width:65px;height:1px;background:#6a6a6a"></div>
<span class="t" style="left:390px;width:65px;text-align:center;top:508px;font-size:12px;line-height:12px;color:#000;font-weight:normal;transform:scaleX(0.91);transform-origin:50% 0;">11-07 Сб</span>
<div style="left:455px;top:542px;width:807px;height:1px;background:#c9c7cc"></div>
<div style="left:390px;top:524px;width:65px;height:18px;background:#d4d0c8;border-top:1px solid #fff;border-left:1px solid #fff;border-right:1px solid #808080"></div>
<div style="left:390px;top:542px;width:65px;height:1px;background:#6a6a6a"></div>
<span class="t" style="left:390px;width:65px;text-align:center;top:527px;font-size:12px;line-height:12px;color:#000;font-weight:normal;transform:scaleX(0.91);transform-origin:50% 0;">11-08 Вс</span>
<div style="left:455px;top:561px;width:807px;height:1px;background:#c9c7cc"></div>
<div style="left:390px;top:543px;width:65px;height:18px;background:#d4d0c8;border-top:1px solid #fff;border-left:1px solid #fff;border-right:1px solid #808080"></div>
<div style="left:390px;top:561px;width:65px;height:1px;background:#6a6a6a"></div>
<span class="t" style="left:390px;width:65px;text-align:center;top:546px;font-size:12px;line-height:12px;color:#000;font-weight:normal;transform:scaleX(0.91);transform-origin:50% 0;">11-09 Пн</span>
<div style="left:455px;top:580px;width:807px;height:1px;background:#c9c7cc"></div>
<div style="left:390px;top:562px;width:65px;height:18px;background:#d4d0c8;border-top:1px solid #fff;border-left:1px solid #fff;border-right:1px solid #808080"></div>
<div style="left:390px;top:580px;width:65px;height:1px;background:#6a6a6a"></div>
<span class="t" style="left:390px;width:65px;text-align:center;top:565px;font-size:12px;line-height:12px;color:#000;font-weight:normal;transform:scaleX(0.91);transform-origin:50% 0;">11-10 Вт</span>
<div style="left:455px;top:599px;width:807px;height:1px;background:#c9c7cc"></div>
<div style="left:390px;top:581px;width:65px;height:18px;background:#d4d0c8;border-top:1px solid #fff;border-left:1px solid #fff;border-right:1px solid #808080"></div>
<div style="left:390px;top:599px;width:65px;height:1px;background:#6a6a6a"></div>
<span class="t" style="left:390px;width:65px;text-align:center;top:584px;font-size:12px;line-height:12px;color:#000;font-weight:normal;transform:scaleX(0.91);transform-origin:50% 0;">11-11 Ср</span>
<div style="left:455px;top:618px;width:807px;height:1px;background:#c9c7cc"></div>
<div style="left:390px;top:600px;width:65px;height:18px;background:#d4d0c8;border-top:1px solid #fff;border-left:1px solid #fff;border-right:1px solid #808080"></div>
<div style="left:390px;top:618px;width:65px;height:1px;background:#6a6a6a"></div>
<span class="t" style="left:390px;width:65px;text-align:center;top:603px;font-size:12px;line-height:12px;color:#000;font-weight:normal;transform:scaleX(0.91);transform-origin:50% 0;">11-12 Чт</span>
<div style="left:455px;top:637px;width:807px;height:1px;background:#c9c7cc"></div>
<div style="left:390px;top:619px;width:65px;height:18px;background:#d4d0c8;border-top:1px solid #fff;border-left:1px solid #fff;border-right:1px solid #808080"></div>
<div style="left:390px;top:637px;width:65px;height:1px;background:#6a6a6a"></div>
<span class="t" style="left:390px;width:65px;text-align:center;top:622px;font-size:12px;line-height:12px;color:#000;font-weight:normal;transform:scaleX(0.91);transform-origin:50% 0;">11-13 Пт</span>
<div style="left:455px;top:656px;width:807px;height:1px;background:#c9c7cc"></div>
<div style="left:390px;top:638px;width:65px;height:14px;background:#d4d0c8;border-top:1px solid #fff;border-left:1px solid #fff;border-right:1px solid #808080"></div>
<div style="left:390px;top:656px;width:65px;height:1px;background:#6a6a6a"></div>
<span class="t" style="left:390px;width:65px;text-align:center;top:641px;font-size:12px;line-height:12px;color:#000;font-weight:normal;transform:scaleX(0.91);transform-origin:50% 0;">11-14 Сб</span>
<div style="left:388px;top:653px;width:890px;height:1px;background:#f4f2e8"></div>
<div style="left:388px;top:370px;width:1px;height:285px;background:#aca899"></div>
<div style="left:388px;top:654px;width:893px;height:1px;background:#aca899"></div>
<div style="left:388px;top:655px;width:893px;height:2px;background:#d4d0c8"></div>
<div style="left:1262px;top:372px;width:16px;height:281px;background:linear-gradient(90deg,#f4f2ee,#fdfcfb)"></div>
<div style="left:1263px;top:374px;width:15px;height:14px;background:linear-gradient(180deg,#c8d8fc,#b4c8f4);border-radius:2px;border:1px solid #fff"></div>
<svg style="left:1266px;top:377px" width="9" height="7" viewBox="0 0 9 7"><path d="M1 5.5L4.5 2L8 5.5" fill="none" stroke="#4d6185" stroke-width="2"/></svg>
<div style="left:1263px;top:389px;width:15px;height:14px;background:linear-gradient(90deg,#c8d8fc,#b4c8f4);border-radius:2px;border:1px solid #fff"></div>
<svg style="left:1267px;top:392px" width="7" height="8" viewBox="0 0 7 8"><path d="M0 1H7M0 3H7M0 5H7M0 7H7" stroke="#8aa4d8"/></svg>
<div style="left:1263px;top:639px;width:15px;height:14px;background:linear-gradient(180deg,#c8d8fc,#b4c8f4);border-radius:2px;border:1px solid #fff"></div>
<svg style="left:1266px;top:643px" width="9" height="7" viewBox="0 0 9 7"><path d="M1 1.5L4.5 5L8 1.5" fill="none" stroke="#4d6185" stroke-width="2"/></svg>
<div style="left:0px;top:724px;width:1364px;height:44px;background:#d4d0c8"></div>
<div style="left:0px;top:724px;width:1364px;height:1px;background:#d4d0c8"></div>
<div style="left:0px;top:725px;width:1364px;height:1px;background:#fff"></div>
<div style="left:2px;top:728px;width:51px;height:38px;background:#d4d0c8;border-top:1px solid #fff;border-left:1px solid #fff;border-right:1px solid #404040;border-bottom:1px solid #404040;box-shadow:inset -1px -1px 0 #808080"></div>
<svg style="left:5px;top:738px" width="19" height="17" viewBox="0 0 19 17"><path d="M1 3Q5 0 9 3L8 8Q4 6 1 8Z" fill="#f04a1a"/><path d="M10 3Q14 1 18 3L17 8Q13 6 9 8Z" fill="#5ab83a"/><path d="M0 9Q4 7 8 9L7 15Q3 13 0 15Z" fill="#2a8ae8"/><path d="M9 9Q13 7 17 9L16 15Q12 13 8 15Z" fill="#f8c020"/></svg>
<span class="t" style="left:21px;top:742px;font-size:12px;line-height:12px;color:#000;font-weight:bold;">Пуск</span>
<svg style="left:71px;top:731px" width="31" height="31" viewBox="0 0 31 31"><path d="M6 17A10 10 0 1 1 25 20H11A5 5 0 0 0 20 22L25 23A11 11 0 0 1 6 17ZM11 15H21A5 5 0 0 0 11 15Z" fill="#3aa0f0" stroke="#1a60c0" stroke-width="1"/><path d="M3 27Q0 22 8 13Q18 3 28 3Q31 6 26 12" fill="none" stroke="#f8c820" stroke-width="2.5"/></svg>
<div style="left:112px;top:728px;width:109px;height:38px;background:#d4d0c8;border-top:1px solid #fff;border-left:1px solid #fff;border-right:1px solid #404040;border-bottom:1px solid #404040;box-shadow:inset -1px -1px 0 #808080"></div>
<svg style="left:115px;top:733px" width="33" height="30" viewBox="0 0 36 36"><path d="M3 5H20L21 7H34V33H3Z" fill="#f8e4a8" stroke="#e0a050"/><rect x="7" y="4" width="10" height="4" fill="#fff"/><rect x="7" y="4" width="3" height="3" fill="#108a10"/><rect x="15" y="7" width="10" height="4" fill="#fff"/><rect x="15" y="7" width="3" height="3" fill="#e05010"/><rect x="23" y="10" width="9" height="4" fill="#fff"/><rect x="23" y="10" width="3" height="3" fill="#2a8ae8"/><path d="M3 14H34V33H3Z" fill="#fbdf90" stroke="#e0a050"/><path d="M7 34V24H30V34H24V28H13V34Z" fill="#8ac4f4" stroke="#3a8ae0" stroke-width="1.5"/></svg>
<span class="t" style="left:151px;top:741px;font-size:11px;line-height:11px;color:#000;font-weight:normal;">Проводник</span>
<div style="left:224px;top:728px;width:2px;height:37px;background:#fff;border-right:1px solid #808080;width:3px"></div>
<div style="left:228px;top:728px;width:2px;height:37px;background:#fff;border-right:1px solid #808080;width:3px"></div>
<svg style="left:239px;top:731px" width="32" height="32" viewBox="0 0 32 32"><defs><linearGradient id="dg" x1="0" y1="0" x2="1" y2="1"><stop offset="0" stop-color="#6aa8f0"/><stop offset="1" stop-color="#2a6ad8"/></linearGradient></defs><rect x="1" y="1" width="30" height="30" rx="3" fill="url(#dg)" stroke="#1a58c0" stroke-width="1.5"/><rect x="6" y="3" width="8" height="4" fill="#108a10" stroke="#fff" stroke-width="0.8"/><rect x="6" y="8.5" width="8" height="4" fill="#c8c8c8" stroke="#fff" stroke-width="0.8"/><circle cx="9" cy="22" r="6" fill="#d8d8d8" stroke="#aaa"/><circle cx="9" cy="21" r="2.5" fill="#b0b0b0"/><rect x="9" y="22" width="20" height="6" rx="2" fill="#e4e4e4" stroke="#999" stroke-width="0.8"/></svg>
<svg style="left:288px;top:731px" width="34" height="32" viewBox="0 0 34 32"><path d="M1 15L15 1L31 17L17 31Z" fill="#fbf6c8" stroke="#000" stroke-width="1.4"/><path d="M1.5 15L15 1.5L17 3.5L3.5 17Z" fill="#000"/><path d="M8 18L18 8M10 20L20 10M12 22L22 12" stroke="#d8d0a0" stroke-width="0.7"/><path d="M12 18Q16 12 22 16L30 20V26L22 26Q15 24 12 18Z" fill="#e8a060" stroke="#8a4010" stroke-width="0.8"/><path d="M12 18H24" stroke="#000" stroke-width="1.5"/><circle cx="18" cy="18" r="1.5" fill="#000"/><rect x="29" y="18" width="3" height="8" fill="#000"/></svg>
<svg style="left:339px;top:731px" width="32" height="32" viewBox="0 0 32 32"><defs><radialGradient id="cg" cx="0.4" cy="0.35" r="0.7"><stop offset="0" stop-color="#eaf4ff"/><stop offset="0.7" stop-color="#a8c8ec"/><stop offset="1" stop-color="#5a80b0"/></radialGradient></defs><circle cx="16" cy="16" r="15" fill="url(#cg)" stroke="#4a6a90" stroke-width="1.2"/><path d="M16 16V5" stroke="#555" stroke-width="2"/><path d="M16 16L8 24" stroke="#111" stroke-width="2.5"/><path d="M4 16H6M26 16H28M16 28V26" stroke="#fff" stroke-width="1"/></svg>
<svg style="left:389px;top:731px" width="31" height="32" viewBox="0 0 31 32"><defs><linearGradient id="pg" x1="0" y1="0" x2="0" y2="1"><stop offset="0" stop-color="#f4f8ff"/><stop offset="0.35" stop-color="#7ab0f0"/><stop offset="0.5" stop-color="#3a80e0"/><stop offset="0.75" stop-color="#9ac8f8"/><stop offset="1" stop-color="#5a9ae8"/></linearGradient></defs><rect x="0.5" y="0.5" width="29" height="30" fill="#fff" stroke="#888"/><rect x="2" y="2" width="26" height="22" fill="url(#pg)"/></svg>
<svg style="left:440px;top:731px" width="31" height="32" viewBox="0 0 31 32"><path d="M2 5Q16 -1 29 5V17Q27 26 15.5 31Q4 26 2 17Z" fill="#1a58b0" stroke="#a0b8d8" stroke-width="1.2"/><path d="M4 11L9 20L12 13L15 20L18 13L22 20L27 11" fill="none" stroke="#e8eef8" stroke-width="2.2"/><path d="M3 20H28L26 25H5Z" fill="#30a030"/><rect x="9" y="21" width="13" height="3" fill="#90d890"/></svg>
<svg style="left:489px;top:731px" width="32" height="32" viewBox="0 0 32 32"><defs><radialGradient id="og" cx="0.45" cy="0.4" r="0.6"><stop offset="0" stop-color="#fffce0"/><stop offset="0.7" stop-color="#fbd860"/><stop offset="1" stop-color="#e8a820"/></radialGradient></defs><circle cx="16" cy="16" r="14.5" fill="url(#og)" stroke="#d8a020" stroke-width="0.8"/><path d="M4 12L8 10V22H5.5V13.5L4 14Z" fill="#e01010"/><path d="M25 13A7 6 0 1 0 25 20H29M23.5 14.5A4.5 3.5 0 1 0 23.5 18.5H29" fill="none" stroke="#e01010" stroke-width="1.8"/></svg>
<div style="left:530px;top:728px;width:118px;height:38px;background:#d4d0c8;border-top:1px solid #fff;border-left:1px solid #fff;border-right:1px solid #404040;border-bottom:1px solid #404040;box-shadow:inset -1px -1px 0 #808080"></div>
<svg style="left:530px;top:726px" width="36" height="36" viewBox="0 0 36 36"><rect x="6" y="5" width="9" height="13" rx="1.5" fill="#f4c030" stroke="#9a6010" stroke-width="1"/><rect x="7" y="6" width="7" height="3" fill="#fff4b0"/><rect x="12" y="8" width="1.5" height="9" fill="#e87010"/><path d="M20 6.5H31V16" fill="none" stroke="#20a020" stroke-width="2" stroke-dasharray="2 1"/><path d="M6.5 23V30H17" fill="none" stroke="#20a020" stroke-width="2" stroke-dasharray="2 1"/><path d="M16 21Q19 19 22 22L33 34" fill="none" stroke="#6a7a90" stroke-width="2.2"/><path d="M16 21Q19 19 22 22L33 34" fill="none" stroke="#e8f0f8" stroke-width="1"/><path d="M19 35L28 25" stroke="#d8a020" stroke-width="2.6"/><path d="M24 20H30L36 28L33 30L28 24Z" fill="#e0e8f0" stroke="#5a6a80"/></svg>
<span class="t" style="left:570px;top:741px;font-size:11px;line-height:11px;color:#000;font-weight:normal;">Microsoft SQ...</span>
<div style="left:648px;top:728px;width:117px;height:38px;background:#d4d0c8;border-top:1px solid #fff;border-left:1px solid #fff;border-right:1px solid #404040;border-bottom:1px solid #404040;box-shadow:inset -1px -1px 0 #808080"></div>
<svg style="left:648px;top:726px" width="36" height="36" viewBox="0 0 36 36"><rect x="6" y="5" width="9" height="13" rx="1.5" fill="#f4c030" stroke="#9a6010" stroke-width="1"/><rect x="7" y="6" width="7" height="3" fill="#fff4b0"/><rect x="12" y="8" width="1.5" height="9" fill="#e87010"/><path d="M20 6.5H31V16" fill="none" stroke="#20a020" stroke-width="2" stroke-dasharray="2 1"/><path d="M6.5 23V30H17" fill="none" stroke="#20a020" stroke-width="2" stroke-dasharray="2 1"/><path d="M16 21Q19 19 22 22L33 34" fill="none" stroke="#6a7a90" stroke-width="2.2"/><path d="M16 21Q19 19 22 22L33 34" fill="none" stroke="#e8f0f8" stroke-width="1"/><path d="M19 35L28 25" stroke="#d8a020" stroke-width="2.6"/><path d="M24 20H30L36 28L33 30L28 24Z" fill="#e0e8f0" stroke="#5a6a80"/></svg>
<span class="t" style="left:688px;top:741px;font-size:11px;line-height:11px;color:#000;font-weight:normal;">Microsoft SQ...</span>
<div style="left:767px;top:728px;width:117px;height:38px;background:#d4d0c8;border-top:1px solid #fff;border-left:1px solid #fff;border-right:1px solid #404040;border-bottom:1px solid #404040;box-shadow:inset -1px -1px 0 #808080"></div>
<svg style="left:771px;top:731px" width="32" height="32" viewBox="0 0 32 32"><circle cx="16" cy="16" r="14" fill="#5a5a5a" stroke="#a02020" stroke-width="1.5"/><circle cx="16" cy="16" r="10" fill="#9a9a9a"/><circle cx="17" cy="16" r="6" fill="#111"/><circle cx="15" cy="14" r="1.5" fill="#fff"/></svg>
<span class="t" style="left:807px;top:741px;font-size:11px;line-height:11px;color:#000;font-weight:normal;">Менеджер ...</span>
<div style="left:886px;top:728px;width:116px;height:38px;background:#d4d0c8;border-top:1px solid #fff;border-left:1px solid #fff;border-right:1px solid #404040;border-bottom:1px solid #404040;box-shadow:inset -1px -1px 0 #808080"></div>
<svg style="left:890px;top:731px" width="32" height="32" viewBox="0 0 32 32"><circle cx="16" cy="16" r="14.5" fill="url(#og)" stroke="#d8a020" stroke-width="0.8"/><path d="M4 12L8 10V22H5.5V13.5L4 14Z" fill="#e01010"/><path d="M25 13A7 6 0 1 0 25 20H29M23.5 14.5A4.5 3.5 0 1 0 23.5 18.5H29" fill="none" stroke="#e01010" stroke-width="1.8"/></svg>
<span class="t" style="left:926px;top:741px;font-size:11px;line-height:11px;color:#000;font-weight:normal;">Комплексна...</span>
<div style="left:1004px;top:728px;width:116px;height:38px;background:#d4d0c8;border-top:1px solid #fff;border-left:1px solid #fff;border-right:1px solid #404040;border-bottom:1px solid #404040;box-shadow:inset -1px -1px 0 #808080"></div>
<svg style="left:1009px;top:730px" width="30" height="32" viewBox="0 0 32 38"><path d="M5 5H15L28 12V35H5Z" fill="#5a7898"/><rect x="5" y="5" width="6" height="30" fill="#3a5a80" stroke="#0a1830"/><path d="M11 16H30V35H11Z" fill="#fff" stroke="#444" stroke-width="0.8"/><path d="M14 21H28M14 26H25M14 31H28" stroke="#3a5a80" stroke-width="1.8"/><path d="M2 17Q14 6 28 10" fill="none" stroke="#fff" stroke-width="2.2"/><path d="M3 10Q14 3 24 6" fill="none" stroke="#fff" stroke-width="2"/></svg>
<span class="t" style="left:1044px;top:741px;font-size:11px;line-height:11px;color:#000;font-weight:normal;">Настройка ...</span>
<span class="t" style="left:1132px;top:739px;font-size:11px;line-height:11px;color:#000;font-weight:normal;">EN</span>
<div style="left:1152px;top:734px;width:2px;height:22px;background:#808080;border-right:1px solid #fff"></div>
<div style="left:1156px;top:728px;width:207px;height:38px;background:#d4d0c8;border-top:1px solid #808080;border-left:1px solid #808080;border-right:1px solid #fff;border-bottom:1px solid #fff"></div>
<svg style="left:1163px;top:740px" width="6" height="9" viewBox="0 0 6 9"><path d="M0.5 4L3 1.5L5.5 4M0.5 8L3 5.5L5.5 8" fill="none" stroke="#000" stroke-width="1.3"/></svg>
<svg style="left:1180px;top:738px" width="17" height="17" viewBox="0 0 17 17"><path d="M1 3L7 2V8H1ZM9 2L16 1V8H9ZM1 10H7V16L1 15ZM9 10H16V17L9 16Z" fill="#f4f4f4" stroke="#a0a0a0"/></svg>
<svg style="left:1203px;top:738px" width="17" height="17" viewBox="0 0 17 17"><path d="M2 1V16" stroke="#909090" stroke-width="1.5"/><path d="M3 2H15L12 6L15 10H3Z" fill="#f0f0f0" stroke="#a0a0a0"/></svg>
<svg style="left:1227px;top:736px" width="17" height="18" viewBox="0 0 17 18"><rect x="2" y="1" width="4" height="8" fill="#fff" stroke="#555"/><path d="M4 9V16H15" stroke="#555"/><rect x="7" y="5" width="9" height="9" fill="#d0d0d0" stroke="#777"/></svg>
<svg style="left:1250px;top:738px" width="17" height="15" viewBox="0 0 17 15"><path d="M1 5H4L8 1V14L4 10H1Z" fill="#e8e8e8" stroke="#a0a0a0"/><path d="M10 4Q12 7.5 10 11M12 2Q15 7.5 12 13" fill="none" stroke="#b0b0b0"/></svg>
<span class="t" style="left:1280px;width:58px;text-align:center;top:734px;font-size:11px;line-height:11px;color:#000;font-weight:normal;letter-spacing:-0.25px;">15:02</span>
<span class="t" style="left:1278px;width:62px;text-align:center;top:750px;font-size:11px;line-height:11px;color:#000;font-weight:normal;">15.12.2015</span>
<svg style="left:1345px;top:741px" width="15" height="12" viewBox="0 0 15 12"><rect x="0" y="0" width="15" height="12" fill="#2a6ad8"/><path d="M1 3L5 6L9 2L14 5" stroke="#7ac0f8" fill="none"/><rect x="0" y="9" width="15" height="3" fill="#222"/><rect x="1" y="9" width="2" height="2" fill="#e03030"/><rect x="3" y="10" width="2" height="2" fill="#f0d020"/></svg>
</body></html>
